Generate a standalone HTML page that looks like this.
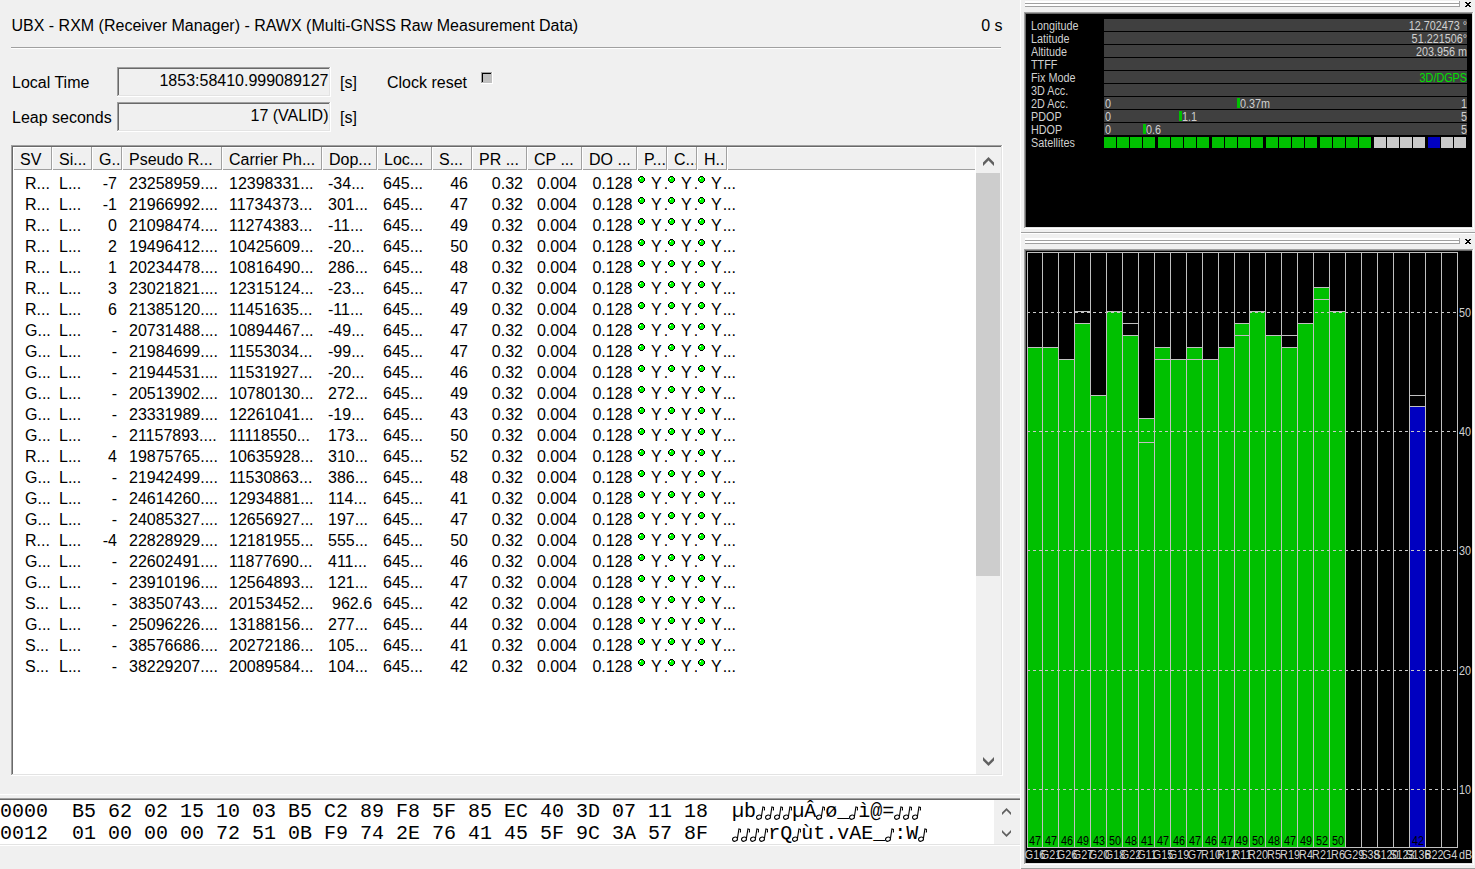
<!DOCTYPE html>
<html><head><meta charset="utf-8"><style>
html,body{margin:0;padding:0;}
body{width:1475px;height:869px;overflow:hidden;position:relative;background:#f0f0f0;font-family:"Liberation Sans", sans-serif;color:#000;}
body>div, body>svg{position:absolute;}
.t{white-space:nowrap;}
</style></head><body>
<div class="t" style="left:11.5px;top:18.46px;font-size:16px;line-height:16px;color:#000;font-family:'Liberation Sans', sans-serif;">UBX - RXM (Receiver Manager) - RAWX (Multi-GNSS Raw Measurement Data)</div>
<div class="t" style="left:402.5px;width:600px;text-align:right;top:18.46px;font-size:16px;line-height:16px;color:#000;font-family:'Liberation Sans', sans-serif;">0 s</div>
<div style="left:11px;top:47px;width:990px;height:1px;background:#a0a0a0;"></div>
<div style="left:11px;top:48px;width:990px;height:1px;background:#ffffff;"></div>
<div class="t" style="left:12px;top:75.46px;font-size:16px;line-height:16px;color:#000;font-family:'Liberation Sans', sans-serif;">Local Time</div>
<div style="left:117px;top:67px;width:214px;height:1px;background:#a0a0a0;"></div>
<div style="left:117px;top:67px;width:1px;height:30px;background:#a0a0a0;"></div>
<div style="left:118px;top:68px;width:212px;height:1px;background:#696969;"></div>
<div style="left:118px;top:68px;width:1px;height:28px;background:#696969;"></div>
<div style="left:117px;top:96px;width:214px;height:1px;background:#ffffff;"></div>
<div style="left:330px;top:67px;width:1px;height:30px;background:#ffffff;"></div>
<div style="left:118px;top:95px;width:212px;height:1px;background:#e3e3e3;"></div>
<div style="left:329px;top:68px;width:1px;height:28px;background:#e3e3e3;"></div>
<div class="t" style="left:-271.5px;width:600px;text-align:right;top:73.46px;font-size:16px;line-height:16px;color:#000;font-family:'Liberation Sans', sans-serif;">1853:58410.999089127</div>
<div class="t" style="left:340px;top:75.46px;font-size:16px;line-height:16px;color:#000;font-family:'Liberation Sans', sans-serif;">[s]</div>
<div class="t" style="left:387px;top:75.46px;font-size:16px;line-height:16px;color:#000;font-family:'Liberation Sans', sans-serif;">Clock reset</div>
<div style="left:481px;top:72px;width:12px;height:1px;background:#a0a0a0;"></div>
<div style="left:481px;top:72px;width:1px;height:12px;background:#a0a0a0;"></div>
<div style="left:482px;top:73px;width:10px;height:1px;background:#000000;"></div>
<div style="left:482px;top:73px;width:1px;height:10px;background:#000000;"></div>
<div style="left:481px;top:83px;width:12px;height:1px;background:#ffffff;"></div>
<div style="left:492px;top:72px;width:1px;height:12px;background:#ffffff;"></div>
<div style="left:482px;top:82px;width:10px;height:1px;background:#c0c0c0;"></div>
<div style="left:491px;top:73px;width:1px;height:10px;background:#c0c0c0;"></div>
<div style="left:483px;top:74px;width:8px;height:8px;background:#c0c0c0;"></div>
<div class="t" style="left:12px;top:110.46px;font-size:16px;line-height:16px;color:#000;font-family:'Liberation Sans', sans-serif;">Leap seconds</div>
<div style="left:117px;top:102px;width:214px;height:1px;background:#a0a0a0;"></div>
<div style="left:117px;top:102px;width:1px;height:30px;background:#a0a0a0;"></div>
<div style="left:118px;top:103px;width:212px;height:1px;background:#696969;"></div>
<div style="left:118px;top:103px;width:1px;height:28px;background:#696969;"></div>
<div style="left:117px;top:131px;width:214px;height:1px;background:#ffffff;"></div>
<div style="left:330px;top:102px;width:1px;height:30px;background:#ffffff;"></div>
<div style="left:118px;top:130px;width:212px;height:1px;background:#e3e3e3;"></div>
<div style="left:329px;top:103px;width:1px;height:28px;background:#e3e3e3;"></div>
<div class="t" style="left:-271.5px;width:600px;text-align:right;top:108.46px;font-size:16px;line-height:16px;color:#000;font-family:'Liberation Sans', sans-serif;">17 (VALID)</div>
<div class="t" style="left:340px;top:110.46px;font-size:16px;line-height:16px;color:#000;font-family:'Liberation Sans', sans-serif;">[s]</div>
<div style="left:11px;top:145px;width:992px;height:1px;background:#a0a0a0;"></div>
<div style="left:11px;top:145px;width:1px;height:631px;background:#a0a0a0;"></div>
<div style="left:12px;top:146px;width:990px;height:1px;background:#696969;"></div>
<div style="left:12px;top:146px;width:1px;height:629px;background:#696969;"></div>
<div style="left:11px;top:775px;width:992px;height:1px;background:#ffffff;"></div>
<div style="left:1002px;top:145px;width:1px;height:631px;background:#ffffff;"></div>
<div style="left:12px;top:774px;width:990px;height:1px;background:#e3e3e3;"></div>
<div style="left:1001px;top:146px;width:1px;height:629px;background:#e3e3e3;"></div>
<div style="left:13px;top:147px;width:988px;height:627px;background:#ffffff;"></div>
<div style="left:13px;top:147px;width:962px;height:23px;background:#f0f0f0;"></div>
<div style="left:13px;top:169px;width:962px;height:1px;background:#a0a0a0;"></div>
<div style="left:13px;top:147px;width:39px;height:1px;background:#ffffff;"></div>
<div style="left:51px;top:147px;width:1px;height:23px;background:#a0a0a0;"></div>
<div style="left:13px;top:147px;width:1px;height:23px;background:#ffffff;"></div>
<div class="t" style="left:20px;top:152.46px;width:31px;overflow:hidden;font-size:16px;line-height:16px">SV</div>
<div style="left:52px;top:147px;width:40px;height:1px;background:#ffffff;"></div>
<div style="left:91px;top:147px;width:1px;height:23px;background:#a0a0a0;"></div>
<div style="left:52px;top:147px;width:1px;height:23px;background:#ffffff;"></div>
<div class="t" style="left:59px;top:152.46px;width:32px;overflow:hidden;font-size:16px;line-height:16px">Si...</div>
<div style="left:92px;top:147px;width:30px;height:1px;background:#ffffff;"></div>
<div style="left:121px;top:147px;width:1px;height:23px;background:#a0a0a0;"></div>
<div style="left:92px;top:147px;width:1px;height:23px;background:#ffffff;"></div>
<div class="t" style="left:99px;top:152.46px;width:22px;overflow:hidden;font-size:16px;line-height:16px">G..</div>
<div style="left:122px;top:147px;width:100px;height:1px;background:#ffffff;"></div>
<div style="left:221px;top:147px;width:1px;height:23px;background:#a0a0a0;"></div>
<div style="left:122px;top:147px;width:1px;height:23px;background:#ffffff;"></div>
<div class="t" style="left:129px;top:152.46px;width:92px;overflow:hidden;font-size:16px;line-height:16px">Pseudo R...</div>
<div style="left:222px;top:147px;width:100px;height:1px;background:#ffffff;"></div>
<div style="left:321px;top:147px;width:1px;height:23px;background:#a0a0a0;"></div>
<div style="left:222px;top:147px;width:1px;height:23px;background:#ffffff;"></div>
<div class="t" style="left:229px;top:152.46px;width:92px;overflow:hidden;font-size:16px;line-height:16px">Carrier Ph...</div>
<div style="left:322px;top:147px;width:55px;height:1px;background:#ffffff;"></div>
<div style="left:376px;top:147px;width:1px;height:23px;background:#a0a0a0;"></div>
<div style="left:322px;top:147px;width:1px;height:23px;background:#ffffff;"></div>
<div class="t" style="left:329px;top:152.46px;width:47px;overflow:hidden;font-size:16px;line-height:16px">Dop...</div>
<div style="left:377px;top:147px;width:55px;height:1px;background:#ffffff;"></div>
<div style="left:431px;top:147px;width:1px;height:23px;background:#a0a0a0;"></div>
<div style="left:377px;top:147px;width:1px;height:23px;background:#ffffff;"></div>
<div class="t" style="left:384px;top:152.46px;width:47px;overflow:hidden;font-size:16px;line-height:16px">Loc...</div>
<div style="left:432px;top:147px;width:40px;height:1px;background:#ffffff;"></div>
<div style="left:471px;top:147px;width:1px;height:23px;background:#a0a0a0;"></div>
<div style="left:432px;top:147px;width:1px;height:23px;background:#ffffff;"></div>
<div class="t" style="left:439px;top:152.46px;width:32px;overflow:hidden;font-size:16px;line-height:16px">S...</div>
<div style="left:472px;top:147px;width:55px;height:1px;background:#ffffff;"></div>
<div style="left:526px;top:147px;width:1px;height:23px;background:#a0a0a0;"></div>
<div style="left:472px;top:147px;width:1px;height:23px;background:#ffffff;"></div>
<div class="t" style="left:479px;top:152.46px;width:47px;overflow:hidden;font-size:16px;line-height:16px">PR ...</div>
<div style="left:527px;top:147px;width:55px;height:1px;background:#ffffff;"></div>
<div style="left:581px;top:147px;width:1px;height:23px;background:#a0a0a0;"></div>
<div style="left:527px;top:147px;width:1px;height:23px;background:#ffffff;"></div>
<div class="t" style="left:534px;top:152.46px;width:47px;overflow:hidden;font-size:16px;line-height:16px">CP ...</div>
<div style="left:582px;top:147px;width:55px;height:1px;background:#ffffff;"></div>
<div style="left:636px;top:147px;width:1px;height:23px;background:#a0a0a0;"></div>
<div style="left:582px;top:147px;width:1px;height:23px;background:#ffffff;"></div>
<div class="t" style="left:589px;top:152.46px;width:47px;overflow:hidden;font-size:16px;line-height:16px">DO ...</div>
<div style="left:637px;top:147px;width:30px;height:1px;background:#ffffff;"></div>
<div style="left:666px;top:147px;width:1px;height:23px;background:#a0a0a0;"></div>
<div style="left:637px;top:147px;width:1px;height:23px;background:#ffffff;"></div>
<div class="t" style="left:644px;top:152.46px;width:22px;overflow:hidden;font-size:16px;line-height:16px">P...</div>
<div style="left:667px;top:147px;width:30px;height:1px;background:#ffffff;"></div>
<div style="left:696px;top:147px;width:1px;height:23px;background:#a0a0a0;"></div>
<div style="left:667px;top:147px;width:1px;height:23px;background:#ffffff;"></div>
<div class="t" style="left:674px;top:152.46px;width:22px;overflow:hidden;font-size:16px;line-height:16px">C...</div>
<div style="left:697px;top:147px;width:30px;height:1px;background:#ffffff;"></div>
<div style="left:726px;top:147px;width:1px;height:23px;background:#a0a0a0;"></div>
<div style="left:697px;top:147px;width:1px;height:23px;background:#ffffff;"></div>
<div class="t" style="left:704px;top:152.46px;width:22px;overflow:hidden;font-size:16px;line-height:16px">H..</div>
<div style="left:727px;top:147px;width:1px;height:23px;background:#ffffff;"></div>
<div style="left:727px;top:147px;width:248px;height:1px;background:#ffffff;"></div>
<svg style="position:absolute;left:0;top:0" width="0" height="0"><defs><g id="dot" shape-rendering="crispEdges"><rect x="2" y="0" width="3" height="1" fill="#000"/><rect x="2" y="6" width="3" height="1" fill="#000"/><rect x="0" y="2" width="1" height="3" fill="#000"/><rect x="6" y="2" width="1" height="3" fill="#000"/><rect x="1" y="1" width="1" height="1" fill="#000"/><rect x="5" y="1" width="1" height="1" fill="#000"/><rect x="1" y="5" width="1" height="1" fill="#000"/><rect x="5" y="5" width="1" height="1" fill="#000"/><rect x="2" y="1" width="3" height="5" fill="#00ff00"/><rect x="1" y="2" width="5" height="3" fill="#00ff00"/><rect x="2" y="2" width="1" height="1" fill="#ffffff"/></g></defs></svg>
<div class="t" style="left:25px;top:176.46px;font-size:16px;line-height:16px;color:#000;font-family:'Liberation Sans', sans-serif;">R...</div>
<div class="t" style="left:59px;top:176.46px;font-size:16px;line-height:16px;color:#000;font-family:'Liberation Sans', sans-serif;">L...</div>
<div class="t" style="left:-483px;width:600px;text-align:right;top:176.46px;font-size:16px;line-height:16px;color:#000;font-family:'Liberation Sans', sans-serif;">-7</div>
<div class="t" style="left:129px;top:176.46px;font-size:16px;line-height:16px;color:#000;font-family:'Liberation Sans', sans-serif;">23258959....</div>
<div class="t" style="left:229px;top:176.46px;font-size:16px;line-height:16px;color:#000;font-family:'Liberation Sans', sans-serif;">12398331...</div>
<div class="t" style="left:328px;top:176.46px;font-size:16px;line-height:16px;color:#000;font-family:'Liberation Sans', sans-serif;">-34...</div>
<div class="t" style="left:383px;top:176.46px;font-size:16px;line-height:16px;color:#000;font-family:'Liberation Sans', sans-serif;">645...</div>
<div class="t" style="left:-132px;width:600px;text-align:right;top:176.46px;font-size:16px;line-height:16px;color:#000;font-family:'Liberation Sans', sans-serif;">46</div>
<div class="t" style="left:-77px;width:600px;text-align:right;top:176.46px;font-size:16px;line-height:16px;color:#000;font-family:'Liberation Sans', sans-serif;">0.32</div>
<div class="t" style="left:-23px;width:600px;text-align:right;top:176.46px;font-size:16px;line-height:16px;color:#000;font-family:'Liberation Sans', sans-serif;">0.004</div>
<div class="t" style="left:32.5px;width:600px;text-align:right;top:176.46px;font-size:16px;line-height:16px;color:#000;font-family:'Liberation Sans', sans-serif;">0.128</div>
<svg style="position:absolute;left:638px;top:176px" width="7" height="7"><use href="#dot"/></svg>
<div class="t" style="left:651px;top:176.46px;width:16px;overflow:hidden;font-size:16px;line-height:16px">Y<span style='margin-left:2px'>.</span></div>
<svg style="position:absolute;left:668px;top:176px" width="7" height="7"><use href="#dot"/></svg>
<div class="t" style="left:681px;top:176.46px;width:16px;overflow:hidden;font-size:16px;line-height:16px">Y<span style='margin-left:2px'>.</span></div>
<svg style="position:absolute;left:698px;top:176px" width="7" height="7"><use href="#dot"/></svg>
<div class="t" style="left:711px;top:176.46px;width:47px;overflow:hidden;font-size:16px;line-height:16px">Y<span style='margin-left:1px'>...</span></div>
<div class="t" style="left:25px;top:197.46px;font-size:16px;line-height:16px;color:#000;font-family:'Liberation Sans', sans-serif;">R...</div>
<div class="t" style="left:59px;top:197.46px;font-size:16px;line-height:16px;color:#000;font-family:'Liberation Sans', sans-serif;">L...</div>
<div class="t" style="left:-483px;width:600px;text-align:right;top:197.46px;font-size:16px;line-height:16px;color:#000;font-family:'Liberation Sans', sans-serif;">-1</div>
<div class="t" style="left:129px;top:197.46px;font-size:16px;line-height:16px;color:#000;font-family:'Liberation Sans', sans-serif;">21966992....</div>
<div class="t" style="left:229px;top:197.46px;font-size:16px;line-height:16px;color:#000;font-family:'Liberation Sans', sans-serif;">11734373...</div>
<div class="t" style="left:328px;top:197.46px;font-size:16px;line-height:16px;color:#000;font-family:'Liberation Sans', sans-serif;">301...</div>
<div class="t" style="left:383px;top:197.46px;font-size:16px;line-height:16px;color:#000;font-family:'Liberation Sans', sans-serif;">645...</div>
<div class="t" style="left:-132px;width:600px;text-align:right;top:197.46px;font-size:16px;line-height:16px;color:#000;font-family:'Liberation Sans', sans-serif;">47</div>
<div class="t" style="left:-77px;width:600px;text-align:right;top:197.46px;font-size:16px;line-height:16px;color:#000;font-family:'Liberation Sans', sans-serif;">0.32</div>
<div class="t" style="left:-23px;width:600px;text-align:right;top:197.46px;font-size:16px;line-height:16px;color:#000;font-family:'Liberation Sans', sans-serif;">0.004</div>
<div class="t" style="left:32.5px;width:600px;text-align:right;top:197.46px;font-size:16px;line-height:16px;color:#000;font-family:'Liberation Sans', sans-serif;">0.128</div>
<svg style="position:absolute;left:638px;top:197px" width="7" height="7"><use href="#dot"/></svg>
<div class="t" style="left:651px;top:197.46px;width:16px;overflow:hidden;font-size:16px;line-height:16px">Y<span style='margin-left:2px'>.</span></div>
<svg style="position:absolute;left:668px;top:197px" width="7" height="7"><use href="#dot"/></svg>
<div class="t" style="left:681px;top:197.46px;width:16px;overflow:hidden;font-size:16px;line-height:16px">Y<span style='margin-left:2px'>.</span></div>
<svg style="position:absolute;left:698px;top:197px" width="7" height="7"><use href="#dot"/></svg>
<div class="t" style="left:711px;top:197.46px;width:47px;overflow:hidden;font-size:16px;line-height:16px">Y<span style='margin-left:1px'>...</span></div>
<div class="t" style="left:25px;top:218.46px;font-size:16px;line-height:16px;color:#000;font-family:'Liberation Sans', sans-serif;">R...</div>
<div class="t" style="left:59px;top:218.46px;font-size:16px;line-height:16px;color:#000;font-family:'Liberation Sans', sans-serif;">L...</div>
<div class="t" style="left:-483px;width:600px;text-align:right;top:218.46px;font-size:16px;line-height:16px;color:#000;font-family:'Liberation Sans', sans-serif;">0</div>
<div class="t" style="left:129px;top:218.46px;font-size:16px;line-height:16px;color:#000;font-family:'Liberation Sans', sans-serif;">21098474....</div>
<div class="t" style="left:229px;top:218.46px;font-size:16px;line-height:16px;color:#000;font-family:'Liberation Sans', sans-serif;">11274383...</div>
<div class="t" style="left:328px;top:218.46px;font-size:16px;line-height:16px;color:#000;font-family:'Liberation Sans', sans-serif;">-11...</div>
<div class="t" style="left:383px;top:218.46px;font-size:16px;line-height:16px;color:#000;font-family:'Liberation Sans', sans-serif;">645...</div>
<div class="t" style="left:-132px;width:600px;text-align:right;top:218.46px;font-size:16px;line-height:16px;color:#000;font-family:'Liberation Sans', sans-serif;">49</div>
<div class="t" style="left:-77px;width:600px;text-align:right;top:218.46px;font-size:16px;line-height:16px;color:#000;font-family:'Liberation Sans', sans-serif;">0.32</div>
<div class="t" style="left:-23px;width:600px;text-align:right;top:218.46px;font-size:16px;line-height:16px;color:#000;font-family:'Liberation Sans', sans-serif;">0.004</div>
<div class="t" style="left:32.5px;width:600px;text-align:right;top:218.46px;font-size:16px;line-height:16px;color:#000;font-family:'Liberation Sans', sans-serif;">0.128</div>
<svg style="position:absolute;left:638px;top:218px" width="7" height="7"><use href="#dot"/></svg>
<div class="t" style="left:651px;top:218.46px;width:16px;overflow:hidden;font-size:16px;line-height:16px">Y<span style='margin-left:2px'>.</span></div>
<svg style="position:absolute;left:668px;top:218px" width="7" height="7"><use href="#dot"/></svg>
<div class="t" style="left:681px;top:218.46px;width:16px;overflow:hidden;font-size:16px;line-height:16px">Y<span style='margin-left:2px'>.</span></div>
<svg style="position:absolute;left:698px;top:218px" width="7" height="7"><use href="#dot"/></svg>
<div class="t" style="left:711px;top:218.46px;width:47px;overflow:hidden;font-size:16px;line-height:16px">Y<span style='margin-left:1px'>...</span></div>
<div class="t" style="left:25px;top:239.46px;font-size:16px;line-height:16px;color:#000;font-family:'Liberation Sans', sans-serif;">R...</div>
<div class="t" style="left:59px;top:239.46px;font-size:16px;line-height:16px;color:#000;font-family:'Liberation Sans', sans-serif;">L...</div>
<div class="t" style="left:-483px;width:600px;text-align:right;top:239.46px;font-size:16px;line-height:16px;color:#000;font-family:'Liberation Sans', sans-serif;">2</div>
<div class="t" style="left:129px;top:239.46px;font-size:16px;line-height:16px;color:#000;font-family:'Liberation Sans', sans-serif;">19496412....</div>
<div class="t" style="left:229px;top:239.46px;font-size:16px;line-height:16px;color:#000;font-family:'Liberation Sans', sans-serif;">10425609...</div>
<div class="t" style="left:328px;top:239.46px;font-size:16px;line-height:16px;color:#000;font-family:'Liberation Sans', sans-serif;">-20...</div>
<div class="t" style="left:383px;top:239.46px;font-size:16px;line-height:16px;color:#000;font-family:'Liberation Sans', sans-serif;">645...</div>
<div class="t" style="left:-132px;width:600px;text-align:right;top:239.46px;font-size:16px;line-height:16px;color:#000;font-family:'Liberation Sans', sans-serif;">50</div>
<div class="t" style="left:-77px;width:600px;text-align:right;top:239.46px;font-size:16px;line-height:16px;color:#000;font-family:'Liberation Sans', sans-serif;">0.32</div>
<div class="t" style="left:-23px;width:600px;text-align:right;top:239.46px;font-size:16px;line-height:16px;color:#000;font-family:'Liberation Sans', sans-serif;">0.004</div>
<div class="t" style="left:32.5px;width:600px;text-align:right;top:239.46px;font-size:16px;line-height:16px;color:#000;font-family:'Liberation Sans', sans-serif;">0.128</div>
<svg style="position:absolute;left:638px;top:239px" width="7" height="7"><use href="#dot"/></svg>
<div class="t" style="left:651px;top:239.46px;width:16px;overflow:hidden;font-size:16px;line-height:16px">Y<span style='margin-left:2px'>.</span></div>
<svg style="position:absolute;left:668px;top:239px" width="7" height="7"><use href="#dot"/></svg>
<div class="t" style="left:681px;top:239.46px;width:16px;overflow:hidden;font-size:16px;line-height:16px">Y<span style='margin-left:2px'>.</span></div>
<svg style="position:absolute;left:698px;top:239px" width="7" height="7"><use href="#dot"/></svg>
<div class="t" style="left:711px;top:239.46px;width:47px;overflow:hidden;font-size:16px;line-height:16px">Y<span style='margin-left:1px'>...</span></div>
<div class="t" style="left:25px;top:260.46px;font-size:16px;line-height:16px;color:#000;font-family:'Liberation Sans', sans-serif;">R...</div>
<div class="t" style="left:59px;top:260.46px;font-size:16px;line-height:16px;color:#000;font-family:'Liberation Sans', sans-serif;">L...</div>
<div class="t" style="left:-483px;width:600px;text-align:right;top:260.46px;font-size:16px;line-height:16px;color:#000;font-family:'Liberation Sans', sans-serif;">1</div>
<div class="t" style="left:129px;top:260.46px;font-size:16px;line-height:16px;color:#000;font-family:'Liberation Sans', sans-serif;">20234478....</div>
<div class="t" style="left:229px;top:260.46px;font-size:16px;line-height:16px;color:#000;font-family:'Liberation Sans', sans-serif;">10816490...</div>
<div class="t" style="left:328px;top:260.46px;font-size:16px;line-height:16px;color:#000;font-family:'Liberation Sans', sans-serif;">286...</div>
<div class="t" style="left:383px;top:260.46px;font-size:16px;line-height:16px;color:#000;font-family:'Liberation Sans', sans-serif;">645...</div>
<div class="t" style="left:-132px;width:600px;text-align:right;top:260.46px;font-size:16px;line-height:16px;color:#000;font-family:'Liberation Sans', sans-serif;">48</div>
<div class="t" style="left:-77px;width:600px;text-align:right;top:260.46px;font-size:16px;line-height:16px;color:#000;font-family:'Liberation Sans', sans-serif;">0.32</div>
<div class="t" style="left:-23px;width:600px;text-align:right;top:260.46px;font-size:16px;line-height:16px;color:#000;font-family:'Liberation Sans', sans-serif;">0.004</div>
<div class="t" style="left:32.5px;width:600px;text-align:right;top:260.46px;font-size:16px;line-height:16px;color:#000;font-family:'Liberation Sans', sans-serif;">0.128</div>
<svg style="position:absolute;left:638px;top:260px" width="7" height="7"><use href="#dot"/></svg>
<div class="t" style="left:651px;top:260.46px;width:16px;overflow:hidden;font-size:16px;line-height:16px">Y<span style='margin-left:2px'>.</span></div>
<svg style="position:absolute;left:668px;top:260px" width="7" height="7"><use href="#dot"/></svg>
<div class="t" style="left:681px;top:260.46px;width:16px;overflow:hidden;font-size:16px;line-height:16px">Y<span style='margin-left:2px'>.</span></div>
<svg style="position:absolute;left:698px;top:260px" width="7" height="7"><use href="#dot"/></svg>
<div class="t" style="left:711px;top:260.46px;width:47px;overflow:hidden;font-size:16px;line-height:16px">Y<span style='margin-left:1px'>...</span></div>
<div class="t" style="left:25px;top:281.46px;font-size:16px;line-height:16px;color:#000;font-family:'Liberation Sans', sans-serif;">R...</div>
<div class="t" style="left:59px;top:281.46px;font-size:16px;line-height:16px;color:#000;font-family:'Liberation Sans', sans-serif;">L...</div>
<div class="t" style="left:-483px;width:600px;text-align:right;top:281.46px;font-size:16px;line-height:16px;color:#000;font-family:'Liberation Sans', sans-serif;">3</div>
<div class="t" style="left:129px;top:281.46px;font-size:16px;line-height:16px;color:#000;font-family:'Liberation Sans', sans-serif;">23021821....</div>
<div class="t" style="left:229px;top:281.46px;font-size:16px;line-height:16px;color:#000;font-family:'Liberation Sans', sans-serif;">12315124...</div>
<div class="t" style="left:328px;top:281.46px;font-size:16px;line-height:16px;color:#000;font-family:'Liberation Sans', sans-serif;">-23...</div>
<div class="t" style="left:383px;top:281.46px;font-size:16px;line-height:16px;color:#000;font-family:'Liberation Sans', sans-serif;">645...</div>
<div class="t" style="left:-132px;width:600px;text-align:right;top:281.46px;font-size:16px;line-height:16px;color:#000;font-family:'Liberation Sans', sans-serif;">47</div>
<div class="t" style="left:-77px;width:600px;text-align:right;top:281.46px;font-size:16px;line-height:16px;color:#000;font-family:'Liberation Sans', sans-serif;">0.32</div>
<div class="t" style="left:-23px;width:600px;text-align:right;top:281.46px;font-size:16px;line-height:16px;color:#000;font-family:'Liberation Sans', sans-serif;">0.004</div>
<div class="t" style="left:32.5px;width:600px;text-align:right;top:281.46px;font-size:16px;line-height:16px;color:#000;font-family:'Liberation Sans', sans-serif;">0.128</div>
<svg style="position:absolute;left:638px;top:281px" width="7" height="7"><use href="#dot"/></svg>
<div class="t" style="left:651px;top:281.46px;width:16px;overflow:hidden;font-size:16px;line-height:16px">Y<span style='margin-left:2px'>.</span></div>
<svg style="position:absolute;left:668px;top:281px" width="7" height="7"><use href="#dot"/></svg>
<div class="t" style="left:681px;top:281.46px;width:16px;overflow:hidden;font-size:16px;line-height:16px">Y<span style='margin-left:2px'>.</span></div>
<svg style="position:absolute;left:698px;top:281px" width="7" height="7"><use href="#dot"/></svg>
<div class="t" style="left:711px;top:281.46px;width:47px;overflow:hidden;font-size:16px;line-height:16px">Y<span style='margin-left:1px'>...</span></div>
<div class="t" style="left:25px;top:302.46px;font-size:16px;line-height:16px;color:#000;font-family:'Liberation Sans', sans-serif;">R...</div>
<div class="t" style="left:59px;top:302.46px;font-size:16px;line-height:16px;color:#000;font-family:'Liberation Sans', sans-serif;">L...</div>
<div class="t" style="left:-483px;width:600px;text-align:right;top:302.46px;font-size:16px;line-height:16px;color:#000;font-family:'Liberation Sans', sans-serif;">6</div>
<div class="t" style="left:129px;top:302.46px;font-size:16px;line-height:16px;color:#000;font-family:'Liberation Sans', sans-serif;">21385120....</div>
<div class="t" style="left:229px;top:302.46px;font-size:16px;line-height:16px;color:#000;font-family:'Liberation Sans', sans-serif;">11451635...</div>
<div class="t" style="left:328px;top:302.46px;font-size:16px;line-height:16px;color:#000;font-family:'Liberation Sans', sans-serif;">-11...</div>
<div class="t" style="left:383px;top:302.46px;font-size:16px;line-height:16px;color:#000;font-family:'Liberation Sans', sans-serif;">645...</div>
<div class="t" style="left:-132px;width:600px;text-align:right;top:302.46px;font-size:16px;line-height:16px;color:#000;font-family:'Liberation Sans', sans-serif;">49</div>
<div class="t" style="left:-77px;width:600px;text-align:right;top:302.46px;font-size:16px;line-height:16px;color:#000;font-family:'Liberation Sans', sans-serif;">0.32</div>
<div class="t" style="left:-23px;width:600px;text-align:right;top:302.46px;font-size:16px;line-height:16px;color:#000;font-family:'Liberation Sans', sans-serif;">0.004</div>
<div class="t" style="left:32.5px;width:600px;text-align:right;top:302.46px;font-size:16px;line-height:16px;color:#000;font-family:'Liberation Sans', sans-serif;">0.128</div>
<svg style="position:absolute;left:638px;top:302px" width="7" height="7"><use href="#dot"/></svg>
<div class="t" style="left:651px;top:302.46px;width:16px;overflow:hidden;font-size:16px;line-height:16px">Y<span style='margin-left:2px'>.</span></div>
<svg style="position:absolute;left:668px;top:302px" width="7" height="7"><use href="#dot"/></svg>
<div class="t" style="left:681px;top:302.46px;width:16px;overflow:hidden;font-size:16px;line-height:16px">Y<span style='margin-left:2px'>.</span></div>
<svg style="position:absolute;left:698px;top:302px" width="7" height="7"><use href="#dot"/></svg>
<div class="t" style="left:711px;top:302.46px;width:47px;overflow:hidden;font-size:16px;line-height:16px">Y<span style='margin-left:1px'>...</span></div>
<div class="t" style="left:25px;top:323.46px;font-size:16px;line-height:16px;color:#000;font-family:'Liberation Sans', sans-serif;">G...</div>
<div class="t" style="left:59px;top:323.46px;font-size:16px;line-height:16px;color:#000;font-family:'Liberation Sans', sans-serif;">L...</div>
<div class="t" style="left:-483px;width:600px;text-align:right;top:323.46px;font-size:16px;line-height:16px;color:#000;font-family:'Liberation Sans', sans-serif;">-</div>
<div class="t" style="left:129px;top:323.46px;font-size:16px;line-height:16px;color:#000;font-family:'Liberation Sans', sans-serif;">20731488....</div>
<div class="t" style="left:229px;top:323.46px;font-size:16px;line-height:16px;color:#000;font-family:'Liberation Sans', sans-serif;">10894467...</div>
<div class="t" style="left:328px;top:323.46px;font-size:16px;line-height:16px;color:#000;font-family:'Liberation Sans', sans-serif;">-49...</div>
<div class="t" style="left:383px;top:323.46px;font-size:16px;line-height:16px;color:#000;font-family:'Liberation Sans', sans-serif;">645...</div>
<div class="t" style="left:-132px;width:600px;text-align:right;top:323.46px;font-size:16px;line-height:16px;color:#000;font-family:'Liberation Sans', sans-serif;">47</div>
<div class="t" style="left:-77px;width:600px;text-align:right;top:323.46px;font-size:16px;line-height:16px;color:#000;font-family:'Liberation Sans', sans-serif;">0.32</div>
<div class="t" style="left:-23px;width:600px;text-align:right;top:323.46px;font-size:16px;line-height:16px;color:#000;font-family:'Liberation Sans', sans-serif;">0.004</div>
<div class="t" style="left:32.5px;width:600px;text-align:right;top:323.46px;font-size:16px;line-height:16px;color:#000;font-family:'Liberation Sans', sans-serif;">0.128</div>
<svg style="position:absolute;left:638px;top:323px" width="7" height="7"><use href="#dot"/></svg>
<div class="t" style="left:651px;top:323.46px;width:16px;overflow:hidden;font-size:16px;line-height:16px">Y<span style='margin-left:2px'>.</span></div>
<svg style="position:absolute;left:668px;top:323px" width="7" height="7"><use href="#dot"/></svg>
<div class="t" style="left:681px;top:323.46px;width:16px;overflow:hidden;font-size:16px;line-height:16px">Y<span style='margin-left:2px'>.</span></div>
<svg style="position:absolute;left:698px;top:323px" width="7" height="7"><use href="#dot"/></svg>
<div class="t" style="left:711px;top:323.46px;width:47px;overflow:hidden;font-size:16px;line-height:16px">Y<span style='margin-left:1px'>...</span></div>
<div class="t" style="left:25px;top:344.46px;font-size:16px;line-height:16px;color:#000;font-family:'Liberation Sans', sans-serif;">G...</div>
<div class="t" style="left:59px;top:344.46px;font-size:16px;line-height:16px;color:#000;font-family:'Liberation Sans', sans-serif;">L...</div>
<div class="t" style="left:-483px;width:600px;text-align:right;top:344.46px;font-size:16px;line-height:16px;color:#000;font-family:'Liberation Sans', sans-serif;">-</div>
<div class="t" style="left:129px;top:344.46px;font-size:16px;line-height:16px;color:#000;font-family:'Liberation Sans', sans-serif;">21984699....</div>
<div class="t" style="left:229px;top:344.46px;font-size:16px;line-height:16px;color:#000;font-family:'Liberation Sans', sans-serif;">11553034...</div>
<div class="t" style="left:328px;top:344.46px;font-size:16px;line-height:16px;color:#000;font-family:'Liberation Sans', sans-serif;">-99...</div>
<div class="t" style="left:383px;top:344.46px;font-size:16px;line-height:16px;color:#000;font-family:'Liberation Sans', sans-serif;">645...</div>
<div class="t" style="left:-132px;width:600px;text-align:right;top:344.46px;font-size:16px;line-height:16px;color:#000;font-family:'Liberation Sans', sans-serif;">47</div>
<div class="t" style="left:-77px;width:600px;text-align:right;top:344.46px;font-size:16px;line-height:16px;color:#000;font-family:'Liberation Sans', sans-serif;">0.32</div>
<div class="t" style="left:-23px;width:600px;text-align:right;top:344.46px;font-size:16px;line-height:16px;color:#000;font-family:'Liberation Sans', sans-serif;">0.004</div>
<div class="t" style="left:32.5px;width:600px;text-align:right;top:344.46px;font-size:16px;line-height:16px;color:#000;font-family:'Liberation Sans', sans-serif;">0.128</div>
<svg style="position:absolute;left:638px;top:344px" width="7" height="7"><use href="#dot"/></svg>
<div class="t" style="left:651px;top:344.46px;width:16px;overflow:hidden;font-size:16px;line-height:16px">Y<span style='margin-left:2px'>.</span></div>
<svg style="position:absolute;left:668px;top:344px" width="7" height="7"><use href="#dot"/></svg>
<div class="t" style="left:681px;top:344.46px;width:16px;overflow:hidden;font-size:16px;line-height:16px">Y<span style='margin-left:2px'>.</span></div>
<svg style="position:absolute;left:698px;top:344px" width="7" height="7"><use href="#dot"/></svg>
<div class="t" style="left:711px;top:344.46px;width:47px;overflow:hidden;font-size:16px;line-height:16px">Y<span style='margin-left:1px'>...</span></div>
<div class="t" style="left:25px;top:365.46px;font-size:16px;line-height:16px;color:#000;font-family:'Liberation Sans', sans-serif;">G...</div>
<div class="t" style="left:59px;top:365.46px;font-size:16px;line-height:16px;color:#000;font-family:'Liberation Sans', sans-serif;">L...</div>
<div class="t" style="left:-483px;width:600px;text-align:right;top:365.46px;font-size:16px;line-height:16px;color:#000;font-family:'Liberation Sans', sans-serif;">-</div>
<div class="t" style="left:129px;top:365.46px;font-size:16px;line-height:16px;color:#000;font-family:'Liberation Sans', sans-serif;">21944531....</div>
<div class="t" style="left:229px;top:365.46px;font-size:16px;line-height:16px;color:#000;font-family:'Liberation Sans', sans-serif;">11531927...</div>
<div class="t" style="left:328px;top:365.46px;font-size:16px;line-height:16px;color:#000;font-family:'Liberation Sans', sans-serif;">-20...</div>
<div class="t" style="left:383px;top:365.46px;font-size:16px;line-height:16px;color:#000;font-family:'Liberation Sans', sans-serif;">645...</div>
<div class="t" style="left:-132px;width:600px;text-align:right;top:365.46px;font-size:16px;line-height:16px;color:#000;font-family:'Liberation Sans', sans-serif;">46</div>
<div class="t" style="left:-77px;width:600px;text-align:right;top:365.46px;font-size:16px;line-height:16px;color:#000;font-family:'Liberation Sans', sans-serif;">0.32</div>
<div class="t" style="left:-23px;width:600px;text-align:right;top:365.46px;font-size:16px;line-height:16px;color:#000;font-family:'Liberation Sans', sans-serif;">0.004</div>
<div class="t" style="left:32.5px;width:600px;text-align:right;top:365.46px;font-size:16px;line-height:16px;color:#000;font-family:'Liberation Sans', sans-serif;">0.128</div>
<svg style="position:absolute;left:638px;top:365px" width="7" height="7"><use href="#dot"/></svg>
<div class="t" style="left:651px;top:365.46px;width:16px;overflow:hidden;font-size:16px;line-height:16px">Y<span style='margin-left:2px'>.</span></div>
<svg style="position:absolute;left:668px;top:365px" width="7" height="7"><use href="#dot"/></svg>
<div class="t" style="left:681px;top:365.46px;width:16px;overflow:hidden;font-size:16px;line-height:16px">Y<span style='margin-left:2px'>.</span></div>
<svg style="position:absolute;left:698px;top:365px" width="7" height="7"><use href="#dot"/></svg>
<div class="t" style="left:711px;top:365.46px;width:47px;overflow:hidden;font-size:16px;line-height:16px">Y<span style='margin-left:1px'>...</span></div>
<div class="t" style="left:25px;top:386.46px;font-size:16px;line-height:16px;color:#000;font-family:'Liberation Sans', sans-serif;">G...</div>
<div class="t" style="left:59px;top:386.46px;font-size:16px;line-height:16px;color:#000;font-family:'Liberation Sans', sans-serif;">L...</div>
<div class="t" style="left:-483px;width:600px;text-align:right;top:386.46px;font-size:16px;line-height:16px;color:#000;font-family:'Liberation Sans', sans-serif;">-</div>
<div class="t" style="left:129px;top:386.46px;font-size:16px;line-height:16px;color:#000;font-family:'Liberation Sans', sans-serif;">20513902....</div>
<div class="t" style="left:229px;top:386.46px;font-size:16px;line-height:16px;color:#000;font-family:'Liberation Sans', sans-serif;">10780130...</div>
<div class="t" style="left:328px;top:386.46px;font-size:16px;line-height:16px;color:#000;font-family:'Liberation Sans', sans-serif;">272...</div>
<div class="t" style="left:383px;top:386.46px;font-size:16px;line-height:16px;color:#000;font-family:'Liberation Sans', sans-serif;">645...</div>
<div class="t" style="left:-132px;width:600px;text-align:right;top:386.46px;font-size:16px;line-height:16px;color:#000;font-family:'Liberation Sans', sans-serif;">49</div>
<div class="t" style="left:-77px;width:600px;text-align:right;top:386.46px;font-size:16px;line-height:16px;color:#000;font-family:'Liberation Sans', sans-serif;">0.32</div>
<div class="t" style="left:-23px;width:600px;text-align:right;top:386.46px;font-size:16px;line-height:16px;color:#000;font-family:'Liberation Sans', sans-serif;">0.004</div>
<div class="t" style="left:32.5px;width:600px;text-align:right;top:386.46px;font-size:16px;line-height:16px;color:#000;font-family:'Liberation Sans', sans-serif;">0.128</div>
<svg style="position:absolute;left:638px;top:386px" width="7" height="7"><use href="#dot"/></svg>
<div class="t" style="left:651px;top:386.46px;width:16px;overflow:hidden;font-size:16px;line-height:16px">Y<span style='margin-left:2px'>.</span></div>
<svg style="position:absolute;left:668px;top:386px" width="7" height="7"><use href="#dot"/></svg>
<div class="t" style="left:681px;top:386.46px;width:16px;overflow:hidden;font-size:16px;line-height:16px">Y<span style='margin-left:2px'>.</span></div>
<svg style="position:absolute;left:698px;top:386px" width="7" height="7"><use href="#dot"/></svg>
<div class="t" style="left:711px;top:386.46px;width:47px;overflow:hidden;font-size:16px;line-height:16px">Y<span style='margin-left:1px'>...</span></div>
<div class="t" style="left:25px;top:407.46px;font-size:16px;line-height:16px;color:#000;font-family:'Liberation Sans', sans-serif;">G...</div>
<div class="t" style="left:59px;top:407.46px;font-size:16px;line-height:16px;color:#000;font-family:'Liberation Sans', sans-serif;">L...</div>
<div class="t" style="left:-483px;width:600px;text-align:right;top:407.46px;font-size:16px;line-height:16px;color:#000;font-family:'Liberation Sans', sans-serif;">-</div>
<div class="t" style="left:129px;top:407.46px;font-size:16px;line-height:16px;color:#000;font-family:'Liberation Sans', sans-serif;">23331989....</div>
<div class="t" style="left:229px;top:407.46px;font-size:16px;line-height:16px;color:#000;font-family:'Liberation Sans', sans-serif;">12261041...</div>
<div class="t" style="left:328px;top:407.46px;font-size:16px;line-height:16px;color:#000;font-family:'Liberation Sans', sans-serif;">-19...</div>
<div class="t" style="left:383px;top:407.46px;font-size:16px;line-height:16px;color:#000;font-family:'Liberation Sans', sans-serif;">645...</div>
<div class="t" style="left:-132px;width:600px;text-align:right;top:407.46px;font-size:16px;line-height:16px;color:#000;font-family:'Liberation Sans', sans-serif;">43</div>
<div class="t" style="left:-77px;width:600px;text-align:right;top:407.46px;font-size:16px;line-height:16px;color:#000;font-family:'Liberation Sans', sans-serif;">0.32</div>
<div class="t" style="left:-23px;width:600px;text-align:right;top:407.46px;font-size:16px;line-height:16px;color:#000;font-family:'Liberation Sans', sans-serif;">0.004</div>
<div class="t" style="left:32.5px;width:600px;text-align:right;top:407.46px;font-size:16px;line-height:16px;color:#000;font-family:'Liberation Sans', sans-serif;">0.128</div>
<svg style="position:absolute;left:638px;top:407px" width="7" height="7"><use href="#dot"/></svg>
<div class="t" style="left:651px;top:407.46px;width:16px;overflow:hidden;font-size:16px;line-height:16px">Y<span style='margin-left:2px'>.</span></div>
<svg style="position:absolute;left:668px;top:407px" width="7" height="7"><use href="#dot"/></svg>
<div class="t" style="left:681px;top:407.46px;width:16px;overflow:hidden;font-size:16px;line-height:16px">Y<span style='margin-left:2px'>.</span></div>
<svg style="position:absolute;left:698px;top:407px" width="7" height="7"><use href="#dot"/></svg>
<div class="t" style="left:711px;top:407.46px;width:47px;overflow:hidden;font-size:16px;line-height:16px">Y<span style='margin-left:1px'>...</span></div>
<div class="t" style="left:25px;top:428.46px;font-size:16px;line-height:16px;color:#000;font-family:'Liberation Sans', sans-serif;">G...</div>
<div class="t" style="left:59px;top:428.46px;font-size:16px;line-height:16px;color:#000;font-family:'Liberation Sans', sans-serif;">L...</div>
<div class="t" style="left:-483px;width:600px;text-align:right;top:428.46px;font-size:16px;line-height:16px;color:#000;font-family:'Liberation Sans', sans-serif;">-</div>
<div class="t" style="left:129px;top:428.46px;font-size:16px;line-height:16px;color:#000;font-family:'Liberation Sans', sans-serif;">21157893....</div>
<div class="t" style="left:229px;top:428.46px;font-size:16px;line-height:16px;color:#000;font-family:'Liberation Sans', sans-serif;">11118550...</div>
<div class="t" style="left:328px;top:428.46px;font-size:16px;line-height:16px;color:#000;font-family:'Liberation Sans', sans-serif;">173...</div>
<div class="t" style="left:383px;top:428.46px;font-size:16px;line-height:16px;color:#000;font-family:'Liberation Sans', sans-serif;">645...</div>
<div class="t" style="left:-132px;width:600px;text-align:right;top:428.46px;font-size:16px;line-height:16px;color:#000;font-family:'Liberation Sans', sans-serif;">50</div>
<div class="t" style="left:-77px;width:600px;text-align:right;top:428.46px;font-size:16px;line-height:16px;color:#000;font-family:'Liberation Sans', sans-serif;">0.32</div>
<div class="t" style="left:-23px;width:600px;text-align:right;top:428.46px;font-size:16px;line-height:16px;color:#000;font-family:'Liberation Sans', sans-serif;">0.004</div>
<div class="t" style="left:32.5px;width:600px;text-align:right;top:428.46px;font-size:16px;line-height:16px;color:#000;font-family:'Liberation Sans', sans-serif;">0.128</div>
<svg style="position:absolute;left:638px;top:428px" width="7" height="7"><use href="#dot"/></svg>
<div class="t" style="left:651px;top:428.46px;width:16px;overflow:hidden;font-size:16px;line-height:16px">Y<span style='margin-left:2px'>.</span></div>
<svg style="position:absolute;left:668px;top:428px" width="7" height="7"><use href="#dot"/></svg>
<div class="t" style="left:681px;top:428.46px;width:16px;overflow:hidden;font-size:16px;line-height:16px">Y<span style='margin-left:2px'>.</span></div>
<svg style="position:absolute;left:698px;top:428px" width="7" height="7"><use href="#dot"/></svg>
<div class="t" style="left:711px;top:428.46px;width:47px;overflow:hidden;font-size:16px;line-height:16px">Y<span style='margin-left:1px'>...</span></div>
<div class="t" style="left:25px;top:449.46px;font-size:16px;line-height:16px;color:#000;font-family:'Liberation Sans', sans-serif;">R...</div>
<div class="t" style="left:59px;top:449.46px;font-size:16px;line-height:16px;color:#000;font-family:'Liberation Sans', sans-serif;">L...</div>
<div class="t" style="left:-483px;width:600px;text-align:right;top:449.46px;font-size:16px;line-height:16px;color:#000;font-family:'Liberation Sans', sans-serif;">4</div>
<div class="t" style="left:129px;top:449.46px;font-size:16px;line-height:16px;color:#000;font-family:'Liberation Sans', sans-serif;">19875765....</div>
<div class="t" style="left:229px;top:449.46px;font-size:16px;line-height:16px;color:#000;font-family:'Liberation Sans', sans-serif;">10635928...</div>
<div class="t" style="left:328px;top:449.46px;font-size:16px;line-height:16px;color:#000;font-family:'Liberation Sans', sans-serif;">310...</div>
<div class="t" style="left:383px;top:449.46px;font-size:16px;line-height:16px;color:#000;font-family:'Liberation Sans', sans-serif;">645...</div>
<div class="t" style="left:-132px;width:600px;text-align:right;top:449.46px;font-size:16px;line-height:16px;color:#000;font-family:'Liberation Sans', sans-serif;">52</div>
<div class="t" style="left:-77px;width:600px;text-align:right;top:449.46px;font-size:16px;line-height:16px;color:#000;font-family:'Liberation Sans', sans-serif;">0.32</div>
<div class="t" style="left:-23px;width:600px;text-align:right;top:449.46px;font-size:16px;line-height:16px;color:#000;font-family:'Liberation Sans', sans-serif;">0.004</div>
<div class="t" style="left:32.5px;width:600px;text-align:right;top:449.46px;font-size:16px;line-height:16px;color:#000;font-family:'Liberation Sans', sans-serif;">0.128</div>
<svg style="position:absolute;left:638px;top:449px" width="7" height="7"><use href="#dot"/></svg>
<div class="t" style="left:651px;top:449.46px;width:16px;overflow:hidden;font-size:16px;line-height:16px">Y<span style='margin-left:2px'>.</span></div>
<svg style="position:absolute;left:668px;top:449px" width="7" height="7"><use href="#dot"/></svg>
<div class="t" style="left:681px;top:449.46px;width:16px;overflow:hidden;font-size:16px;line-height:16px">Y<span style='margin-left:2px'>.</span></div>
<svg style="position:absolute;left:698px;top:449px" width="7" height="7"><use href="#dot"/></svg>
<div class="t" style="left:711px;top:449.46px;width:47px;overflow:hidden;font-size:16px;line-height:16px">Y<span style='margin-left:1px'>...</span></div>
<div class="t" style="left:25px;top:470.46px;font-size:16px;line-height:16px;color:#000;font-family:'Liberation Sans', sans-serif;">G...</div>
<div class="t" style="left:59px;top:470.46px;font-size:16px;line-height:16px;color:#000;font-family:'Liberation Sans', sans-serif;">L...</div>
<div class="t" style="left:-483px;width:600px;text-align:right;top:470.46px;font-size:16px;line-height:16px;color:#000;font-family:'Liberation Sans', sans-serif;">-</div>
<div class="t" style="left:129px;top:470.46px;font-size:16px;line-height:16px;color:#000;font-family:'Liberation Sans', sans-serif;">21942499....</div>
<div class="t" style="left:229px;top:470.46px;font-size:16px;line-height:16px;color:#000;font-family:'Liberation Sans', sans-serif;">11530863...</div>
<div class="t" style="left:328px;top:470.46px;font-size:16px;line-height:16px;color:#000;font-family:'Liberation Sans', sans-serif;">386...</div>
<div class="t" style="left:383px;top:470.46px;font-size:16px;line-height:16px;color:#000;font-family:'Liberation Sans', sans-serif;">645...</div>
<div class="t" style="left:-132px;width:600px;text-align:right;top:470.46px;font-size:16px;line-height:16px;color:#000;font-family:'Liberation Sans', sans-serif;">48</div>
<div class="t" style="left:-77px;width:600px;text-align:right;top:470.46px;font-size:16px;line-height:16px;color:#000;font-family:'Liberation Sans', sans-serif;">0.32</div>
<div class="t" style="left:-23px;width:600px;text-align:right;top:470.46px;font-size:16px;line-height:16px;color:#000;font-family:'Liberation Sans', sans-serif;">0.004</div>
<div class="t" style="left:32.5px;width:600px;text-align:right;top:470.46px;font-size:16px;line-height:16px;color:#000;font-family:'Liberation Sans', sans-serif;">0.128</div>
<svg style="position:absolute;left:638px;top:470px" width="7" height="7"><use href="#dot"/></svg>
<div class="t" style="left:651px;top:470.46px;width:16px;overflow:hidden;font-size:16px;line-height:16px">Y<span style='margin-left:2px'>.</span></div>
<svg style="position:absolute;left:668px;top:470px" width="7" height="7"><use href="#dot"/></svg>
<div class="t" style="left:681px;top:470.46px;width:16px;overflow:hidden;font-size:16px;line-height:16px">Y<span style='margin-left:2px'>.</span></div>
<svg style="position:absolute;left:698px;top:470px" width="7" height="7"><use href="#dot"/></svg>
<div class="t" style="left:711px;top:470.46px;width:47px;overflow:hidden;font-size:16px;line-height:16px">Y<span style='margin-left:1px'>...</span></div>
<div class="t" style="left:25px;top:491.46px;font-size:16px;line-height:16px;color:#000;font-family:'Liberation Sans', sans-serif;">G...</div>
<div class="t" style="left:59px;top:491.46px;font-size:16px;line-height:16px;color:#000;font-family:'Liberation Sans', sans-serif;">L...</div>
<div class="t" style="left:-483px;width:600px;text-align:right;top:491.46px;font-size:16px;line-height:16px;color:#000;font-family:'Liberation Sans', sans-serif;">-</div>
<div class="t" style="left:129px;top:491.46px;font-size:16px;line-height:16px;color:#000;font-family:'Liberation Sans', sans-serif;">24614260....</div>
<div class="t" style="left:229px;top:491.46px;font-size:16px;line-height:16px;color:#000;font-family:'Liberation Sans', sans-serif;">12934881...</div>
<div class="t" style="left:328px;top:491.46px;font-size:16px;line-height:16px;color:#000;font-family:'Liberation Sans', sans-serif;">114...</div>
<div class="t" style="left:383px;top:491.46px;font-size:16px;line-height:16px;color:#000;font-family:'Liberation Sans', sans-serif;">645...</div>
<div class="t" style="left:-132px;width:600px;text-align:right;top:491.46px;font-size:16px;line-height:16px;color:#000;font-family:'Liberation Sans', sans-serif;">41</div>
<div class="t" style="left:-77px;width:600px;text-align:right;top:491.46px;font-size:16px;line-height:16px;color:#000;font-family:'Liberation Sans', sans-serif;">0.32</div>
<div class="t" style="left:-23px;width:600px;text-align:right;top:491.46px;font-size:16px;line-height:16px;color:#000;font-family:'Liberation Sans', sans-serif;">0.004</div>
<div class="t" style="left:32.5px;width:600px;text-align:right;top:491.46px;font-size:16px;line-height:16px;color:#000;font-family:'Liberation Sans', sans-serif;">0.128</div>
<svg style="position:absolute;left:638px;top:491px" width="7" height="7"><use href="#dot"/></svg>
<div class="t" style="left:651px;top:491.46px;width:16px;overflow:hidden;font-size:16px;line-height:16px">Y<span style='margin-left:2px'>.</span></div>
<svg style="position:absolute;left:668px;top:491px" width="7" height="7"><use href="#dot"/></svg>
<div class="t" style="left:681px;top:491.46px;width:16px;overflow:hidden;font-size:16px;line-height:16px">Y<span style='margin-left:2px'>.</span></div>
<svg style="position:absolute;left:698px;top:491px" width="7" height="7"><use href="#dot"/></svg>
<div class="t" style="left:711px;top:491.46px;width:47px;overflow:hidden;font-size:16px;line-height:16px">Y<span style='margin-left:1px'>...</span></div>
<div class="t" style="left:25px;top:512.46px;font-size:16px;line-height:16px;color:#000;font-family:'Liberation Sans', sans-serif;">G...</div>
<div class="t" style="left:59px;top:512.46px;font-size:16px;line-height:16px;color:#000;font-family:'Liberation Sans', sans-serif;">L...</div>
<div class="t" style="left:-483px;width:600px;text-align:right;top:512.46px;font-size:16px;line-height:16px;color:#000;font-family:'Liberation Sans', sans-serif;">-</div>
<div class="t" style="left:129px;top:512.46px;font-size:16px;line-height:16px;color:#000;font-family:'Liberation Sans', sans-serif;">24085327....</div>
<div class="t" style="left:229px;top:512.46px;font-size:16px;line-height:16px;color:#000;font-family:'Liberation Sans', sans-serif;">12656927...</div>
<div class="t" style="left:328px;top:512.46px;font-size:16px;line-height:16px;color:#000;font-family:'Liberation Sans', sans-serif;">197...</div>
<div class="t" style="left:383px;top:512.46px;font-size:16px;line-height:16px;color:#000;font-family:'Liberation Sans', sans-serif;">645...</div>
<div class="t" style="left:-132px;width:600px;text-align:right;top:512.46px;font-size:16px;line-height:16px;color:#000;font-family:'Liberation Sans', sans-serif;">47</div>
<div class="t" style="left:-77px;width:600px;text-align:right;top:512.46px;font-size:16px;line-height:16px;color:#000;font-family:'Liberation Sans', sans-serif;">0.32</div>
<div class="t" style="left:-23px;width:600px;text-align:right;top:512.46px;font-size:16px;line-height:16px;color:#000;font-family:'Liberation Sans', sans-serif;">0.004</div>
<div class="t" style="left:32.5px;width:600px;text-align:right;top:512.46px;font-size:16px;line-height:16px;color:#000;font-family:'Liberation Sans', sans-serif;">0.128</div>
<svg style="position:absolute;left:638px;top:512px" width="7" height="7"><use href="#dot"/></svg>
<div class="t" style="left:651px;top:512.46px;width:16px;overflow:hidden;font-size:16px;line-height:16px">Y<span style='margin-left:2px'>.</span></div>
<svg style="position:absolute;left:668px;top:512px" width="7" height="7"><use href="#dot"/></svg>
<div class="t" style="left:681px;top:512.46px;width:16px;overflow:hidden;font-size:16px;line-height:16px">Y<span style='margin-left:2px'>.</span></div>
<svg style="position:absolute;left:698px;top:512px" width="7" height="7"><use href="#dot"/></svg>
<div class="t" style="left:711px;top:512.46px;width:47px;overflow:hidden;font-size:16px;line-height:16px">Y<span style='margin-left:1px'>...</span></div>
<div class="t" style="left:25px;top:533.46px;font-size:16px;line-height:16px;color:#000;font-family:'Liberation Sans', sans-serif;">R...</div>
<div class="t" style="left:59px;top:533.46px;font-size:16px;line-height:16px;color:#000;font-family:'Liberation Sans', sans-serif;">L...</div>
<div class="t" style="left:-483px;width:600px;text-align:right;top:533.46px;font-size:16px;line-height:16px;color:#000;font-family:'Liberation Sans', sans-serif;">-4</div>
<div class="t" style="left:129px;top:533.46px;font-size:16px;line-height:16px;color:#000;font-family:'Liberation Sans', sans-serif;">22828929....</div>
<div class="t" style="left:229px;top:533.46px;font-size:16px;line-height:16px;color:#000;font-family:'Liberation Sans', sans-serif;">12181955...</div>
<div class="t" style="left:328px;top:533.46px;font-size:16px;line-height:16px;color:#000;font-family:'Liberation Sans', sans-serif;">555...</div>
<div class="t" style="left:383px;top:533.46px;font-size:16px;line-height:16px;color:#000;font-family:'Liberation Sans', sans-serif;">645...</div>
<div class="t" style="left:-132px;width:600px;text-align:right;top:533.46px;font-size:16px;line-height:16px;color:#000;font-family:'Liberation Sans', sans-serif;">50</div>
<div class="t" style="left:-77px;width:600px;text-align:right;top:533.46px;font-size:16px;line-height:16px;color:#000;font-family:'Liberation Sans', sans-serif;">0.32</div>
<div class="t" style="left:-23px;width:600px;text-align:right;top:533.46px;font-size:16px;line-height:16px;color:#000;font-family:'Liberation Sans', sans-serif;">0.004</div>
<div class="t" style="left:32.5px;width:600px;text-align:right;top:533.46px;font-size:16px;line-height:16px;color:#000;font-family:'Liberation Sans', sans-serif;">0.128</div>
<svg style="position:absolute;left:638px;top:533px" width="7" height="7"><use href="#dot"/></svg>
<div class="t" style="left:651px;top:533.46px;width:16px;overflow:hidden;font-size:16px;line-height:16px">Y<span style='margin-left:2px'>.</span></div>
<svg style="position:absolute;left:668px;top:533px" width="7" height="7"><use href="#dot"/></svg>
<div class="t" style="left:681px;top:533.46px;width:16px;overflow:hidden;font-size:16px;line-height:16px">Y<span style='margin-left:2px'>.</span></div>
<svg style="position:absolute;left:698px;top:533px" width="7" height="7"><use href="#dot"/></svg>
<div class="t" style="left:711px;top:533.46px;width:47px;overflow:hidden;font-size:16px;line-height:16px">Y<span style='margin-left:1px'>...</span></div>
<div class="t" style="left:25px;top:554.46px;font-size:16px;line-height:16px;color:#000;font-family:'Liberation Sans', sans-serif;">G...</div>
<div class="t" style="left:59px;top:554.46px;font-size:16px;line-height:16px;color:#000;font-family:'Liberation Sans', sans-serif;">L...</div>
<div class="t" style="left:-483px;width:600px;text-align:right;top:554.46px;font-size:16px;line-height:16px;color:#000;font-family:'Liberation Sans', sans-serif;">-</div>
<div class="t" style="left:129px;top:554.46px;font-size:16px;line-height:16px;color:#000;font-family:'Liberation Sans', sans-serif;">22602491....</div>
<div class="t" style="left:229px;top:554.46px;font-size:16px;line-height:16px;color:#000;font-family:'Liberation Sans', sans-serif;">11877690...</div>
<div class="t" style="left:328px;top:554.46px;font-size:16px;line-height:16px;color:#000;font-family:'Liberation Sans', sans-serif;">411...</div>
<div class="t" style="left:383px;top:554.46px;font-size:16px;line-height:16px;color:#000;font-family:'Liberation Sans', sans-serif;">645...</div>
<div class="t" style="left:-132px;width:600px;text-align:right;top:554.46px;font-size:16px;line-height:16px;color:#000;font-family:'Liberation Sans', sans-serif;">46</div>
<div class="t" style="left:-77px;width:600px;text-align:right;top:554.46px;font-size:16px;line-height:16px;color:#000;font-family:'Liberation Sans', sans-serif;">0.32</div>
<div class="t" style="left:-23px;width:600px;text-align:right;top:554.46px;font-size:16px;line-height:16px;color:#000;font-family:'Liberation Sans', sans-serif;">0.004</div>
<div class="t" style="left:32.5px;width:600px;text-align:right;top:554.46px;font-size:16px;line-height:16px;color:#000;font-family:'Liberation Sans', sans-serif;">0.128</div>
<svg style="position:absolute;left:638px;top:554px" width="7" height="7"><use href="#dot"/></svg>
<div class="t" style="left:651px;top:554.46px;width:16px;overflow:hidden;font-size:16px;line-height:16px">Y<span style='margin-left:2px'>.</span></div>
<svg style="position:absolute;left:668px;top:554px" width="7" height="7"><use href="#dot"/></svg>
<div class="t" style="left:681px;top:554.46px;width:16px;overflow:hidden;font-size:16px;line-height:16px">Y<span style='margin-left:2px'>.</span></div>
<svg style="position:absolute;left:698px;top:554px" width="7" height="7"><use href="#dot"/></svg>
<div class="t" style="left:711px;top:554.46px;width:47px;overflow:hidden;font-size:16px;line-height:16px">Y<span style='margin-left:1px'>...</span></div>
<div class="t" style="left:25px;top:575.46px;font-size:16px;line-height:16px;color:#000;font-family:'Liberation Sans', sans-serif;">G...</div>
<div class="t" style="left:59px;top:575.46px;font-size:16px;line-height:16px;color:#000;font-family:'Liberation Sans', sans-serif;">L...</div>
<div class="t" style="left:-483px;width:600px;text-align:right;top:575.46px;font-size:16px;line-height:16px;color:#000;font-family:'Liberation Sans', sans-serif;">-</div>
<div class="t" style="left:129px;top:575.46px;font-size:16px;line-height:16px;color:#000;font-family:'Liberation Sans', sans-serif;">23910196....</div>
<div class="t" style="left:229px;top:575.46px;font-size:16px;line-height:16px;color:#000;font-family:'Liberation Sans', sans-serif;">12564893...</div>
<div class="t" style="left:328px;top:575.46px;font-size:16px;line-height:16px;color:#000;font-family:'Liberation Sans', sans-serif;">121...</div>
<div class="t" style="left:383px;top:575.46px;font-size:16px;line-height:16px;color:#000;font-family:'Liberation Sans', sans-serif;">645...</div>
<div class="t" style="left:-132px;width:600px;text-align:right;top:575.46px;font-size:16px;line-height:16px;color:#000;font-family:'Liberation Sans', sans-serif;">47</div>
<div class="t" style="left:-77px;width:600px;text-align:right;top:575.46px;font-size:16px;line-height:16px;color:#000;font-family:'Liberation Sans', sans-serif;">0.32</div>
<div class="t" style="left:-23px;width:600px;text-align:right;top:575.46px;font-size:16px;line-height:16px;color:#000;font-family:'Liberation Sans', sans-serif;">0.004</div>
<div class="t" style="left:32.5px;width:600px;text-align:right;top:575.46px;font-size:16px;line-height:16px;color:#000;font-family:'Liberation Sans', sans-serif;">0.128</div>
<svg style="position:absolute;left:638px;top:575px" width="7" height="7"><use href="#dot"/></svg>
<div class="t" style="left:651px;top:575.46px;width:16px;overflow:hidden;font-size:16px;line-height:16px">Y<span style='margin-left:2px'>.</span></div>
<svg style="position:absolute;left:668px;top:575px" width="7" height="7"><use href="#dot"/></svg>
<div class="t" style="left:681px;top:575.46px;width:16px;overflow:hidden;font-size:16px;line-height:16px">Y<span style='margin-left:2px'>.</span></div>
<svg style="position:absolute;left:698px;top:575px" width="7" height="7"><use href="#dot"/></svg>
<div class="t" style="left:711px;top:575.46px;width:47px;overflow:hidden;font-size:16px;line-height:16px">Y<span style='margin-left:1px'>...</span></div>
<div class="t" style="left:25px;top:596.46px;font-size:16px;line-height:16px;color:#000;font-family:'Liberation Sans', sans-serif;">S...</div>
<div class="t" style="left:59px;top:596.46px;font-size:16px;line-height:16px;color:#000;font-family:'Liberation Sans', sans-serif;">L...</div>
<div class="t" style="left:-483px;width:600px;text-align:right;top:596.46px;font-size:16px;line-height:16px;color:#000;font-family:'Liberation Sans', sans-serif;">-</div>
<div class="t" style="left:129px;top:596.46px;font-size:16px;line-height:16px;color:#000;font-family:'Liberation Sans', sans-serif;">38350743....</div>
<div class="t" style="left:229px;top:596.46px;font-size:16px;line-height:16px;color:#000;font-family:'Liberation Sans', sans-serif;">20153452...</div>
<div class="t" style="left:332px;top:596.46px;font-size:16px;line-height:16px;color:#000;font-family:'Liberation Sans', sans-serif;">962.6</div>
<div class="t" style="left:383px;top:596.46px;font-size:16px;line-height:16px;color:#000;font-family:'Liberation Sans', sans-serif;">645...</div>
<div class="t" style="left:-132px;width:600px;text-align:right;top:596.46px;font-size:16px;line-height:16px;color:#000;font-family:'Liberation Sans', sans-serif;">42</div>
<div class="t" style="left:-77px;width:600px;text-align:right;top:596.46px;font-size:16px;line-height:16px;color:#000;font-family:'Liberation Sans', sans-serif;">0.32</div>
<div class="t" style="left:-23px;width:600px;text-align:right;top:596.46px;font-size:16px;line-height:16px;color:#000;font-family:'Liberation Sans', sans-serif;">0.004</div>
<div class="t" style="left:32.5px;width:600px;text-align:right;top:596.46px;font-size:16px;line-height:16px;color:#000;font-family:'Liberation Sans', sans-serif;">0.128</div>
<svg style="position:absolute;left:638px;top:596px" width="7" height="7"><use href="#dot"/></svg>
<div class="t" style="left:651px;top:596.46px;width:16px;overflow:hidden;font-size:16px;line-height:16px">Y<span style='margin-left:2px'>.</span></div>
<svg style="position:absolute;left:668px;top:596px" width="7" height="7"><use href="#dot"/></svg>
<div class="t" style="left:681px;top:596.46px;width:16px;overflow:hidden;font-size:16px;line-height:16px">Y<span style='margin-left:2px'>.</span></div>
<svg style="position:absolute;left:698px;top:596px" width="7" height="7"><use href="#dot"/></svg>
<div class="t" style="left:711px;top:596.46px;width:47px;overflow:hidden;font-size:16px;line-height:16px">Y<span style='margin-left:1px'>...</span></div>
<div class="t" style="left:25px;top:617.46px;font-size:16px;line-height:16px;color:#000;font-family:'Liberation Sans', sans-serif;">G...</div>
<div class="t" style="left:59px;top:617.46px;font-size:16px;line-height:16px;color:#000;font-family:'Liberation Sans', sans-serif;">L...</div>
<div class="t" style="left:-483px;width:600px;text-align:right;top:617.46px;font-size:16px;line-height:16px;color:#000;font-family:'Liberation Sans', sans-serif;">-</div>
<div class="t" style="left:129px;top:617.46px;font-size:16px;line-height:16px;color:#000;font-family:'Liberation Sans', sans-serif;">25096226....</div>
<div class="t" style="left:229px;top:617.46px;font-size:16px;line-height:16px;color:#000;font-family:'Liberation Sans', sans-serif;">13188156...</div>
<div class="t" style="left:328px;top:617.46px;font-size:16px;line-height:16px;color:#000;font-family:'Liberation Sans', sans-serif;">277...</div>
<div class="t" style="left:383px;top:617.46px;font-size:16px;line-height:16px;color:#000;font-family:'Liberation Sans', sans-serif;">645...</div>
<div class="t" style="left:-132px;width:600px;text-align:right;top:617.46px;font-size:16px;line-height:16px;color:#000;font-family:'Liberation Sans', sans-serif;">44</div>
<div class="t" style="left:-77px;width:600px;text-align:right;top:617.46px;font-size:16px;line-height:16px;color:#000;font-family:'Liberation Sans', sans-serif;">0.32</div>
<div class="t" style="left:-23px;width:600px;text-align:right;top:617.46px;font-size:16px;line-height:16px;color:#000;font-family:'Liberation Sans', sans-serif;">0.004</div>
<div class="t" style="left:32.5px;width:600px;text-align:right;top:617.46px;font-size:16px;line-height:16px;color:#000;font-family:'Liberation Sans', sans-serif;">0.128</div>
<svg style="position:absolute;left:638px;top:617px" width="7" height="7"><use href="#dot"/></svg>
<div class="t" style="left:651px;top:617.46px;width:16px;overflow:hidden;font-size:16px;line-height:16px">Y<span style='margin-left:2px'>.</span></div>
<svg style="position:absolute;left:668px;top:617px" width="7" height="7"><use href="#dot"/></svg>
<div class="t" style="left:681px;top:617.46px;width:16px;overflow:hidden;font-size:16px;line-height:16px">Y<span style='margin-left:2px'>.</span></div>
<svg style="position:absolute;left:698px;top:617px" width="7" height="7"><use href="#dot"/></svg>
<div class="t" style="left:711px;top:617.46px;width:47px;overflow:hidden;font-size:16px;line-height:16px">Y<span style='margin-left:1px'>...</span></div>
<div class="t" style="left:25px;top:638.46px;font-size:16px;line-height:16px;color:#000;font-family:'Liberation Sans', sans-serif;">S...</div>
<div class="t" style="left:59px;top:638.46px;font-size:16px;line-height:16px;color:#000;font-family:'Liberation Sans', sans-serif;">L...</div>
<div class="t" style="left:-483px;width:600px;text-align:right;top:638.46px;font-size:16px;line-height:16px;color:#000;font-family:'Liberation Sans', sans-serif;">-</div>
<div class="t" style="left:129px;top:638.46px;font-size:16px;line-height:16px;color:#000;font-family:'Liberation Sans', sans-serif;">38576686....</div>
<div class="t" style="left:229px;top:638.46px;font-size:16px;line-height:16px;color:#000;font-family:'Liberation Sans', sans-serif;">20272186...</div>
<div class="t" style="left:328px;top:638.46px;font-size:16px;line-height:16px;color:#000;font-family:'Liberation Sans', sans-serif;">105...</div>
<div class="t" style="left:383px;top:638.46px;font-size:16px;line-height:16px;color:#000;font-family:'Liberation Sans', sans-serif;">645...</div>
<div class="t" style="left:-132px;width:600px;text-align:right;top:638.46px;font-size:16px;line-height:16px;color:#000;font-family:'Liberation Sans', sans-serif;">41</div>
<div class="t" style="left:-77px;width:600px;text-align:right;top:638.46px;font-size:16px;line-height:16px;color:#000;font-family:'Liberation Sans', sans-serif;">0.32</div>
<div class="t" style="left:-23px;width:600px;text-align:right;top:638.46px;font-size:16px;line-height:16px;color:#000;font-family:'Liberation Sans', sans-serif;">0.004</div>
<div class="t" style="left:32.5px;width:600px;text-align:right;top:638.46px;font-size:16px;line-height:16px;color:#000;font-family:'Liberation Sans', sans-serif;">0.128</div>
<svg style="position:absolute;left:638px;top:638px" width="7" height="7"><use href="#dot"/></svg>
<div class="t" style="left:651px;top:638.46px;width:16px;overflow:hidden;font-size:16px;line-height:16px">Y<span style='margin-left:2px'>.</span></div>
<svg style="position:absolute;left:668px;top:638px" width="7" height="7"><use href="#dot"/></svg>
<div class="t" style="left:681px;top:638.46px;width:16px;overflow:hidden;font-size:16px;line-height:16px">Y<span style='margin-left:2px'>.</span></div>
<svg style="position:absolute;left:698px;top:638px" width="7" height="7"><use href="#dot"/></svg>
<div class="t" style="left:711px;top:638.46px;width:47px;overflow:hidden;font-size:16px;line-height:16px">Y<span style='margin-left:1px'>...</span></div>
<div class="t" style="left:25px;top:659.46px;font-size:16px;line-height:16px;color:#000;font-family:'Liberation Sans', sans-serif;">S...</div>
<div class="t" style="left:59px;top:659.46px;font-size:16px;line-height:16px;color:#000;font-family:'Liberation Sans', sans-serif;">L...</div>
<div class="t" style="left:-483px;width:600px;text-align:right;top:659.46px;font-size:16px;line-height:16px;color:#000;font-family:'Liberation Sans', sans-serif;">-</div>
<div class="t" style="left:129px;top:659.46px;font-size:16px;line-height:16px;color:#000;font-family:'Liberation Sans', sans-serif;">38229207....</div>
<div class="t" style="left:229px;top:659.46px;font-size:16px;line-height:16px;color:#000;font-family:'Liberation Sans', sans-serif;">20089584...</div>
<div class="t" style="left:328px;top:659.46px;font-size:16px;line-height:16px;color:#000;font-family:'Liberation Sans', sans-serif;">104...</div>
<div class="t" style="left:383px;top:659.46px;font-size:16px;line-height:16px;color:#000;font-family:'Liberation Sans', sans-serif;">645...</div>
<div class="t" style="left:-132px;width:600px;text-align:right;top:659.46px;font-size:16px;line-height:16px;color:#000;font-family:'Liberation Sans', sans-serif;">42</div>
<div class="t" style="left:-77px;width:600px;text-align:right;top:659.46px;font-size:16px;line-height:16px;color:#000;font-family:'Liberation Sans', sans-serif;">0.32</div>
<div class="t" style="left:-23px;width:600px;text-align:right;top:659.46px;font-size:16px;line-height:16px;color:#000;font-family:'Liberation Sans', sans-serif;">0.004</div>
<div class="t" style="left:32.5px;width:600px;text-align:right;top:659.46px;font-size:16px;line-height:16px;color:#000;font-family:'Liberation Sans', sans-serif;">0.128</div>
<svg style="position:absolute;left:638px;top:659px" width="7" height="7"><use href="#dot"/></svg>
<div class="t" style="left:651px;top:659.46px;width:16px;overflow:hidden;font-size:16px;line-height:16px">Y<span style='margin-left:2px'>.</span></div>
<svg style="position:absolute;left:668px;top:659px" width="7" height="7"><use href="#dot"/></svg>
<div class="t" style="left:681px;top:659.46px;width:16px;overflow:hidden;font-size:16px;line-height:16px">Y<span style='margin-left:2px'>.</span></div>
<svg style="position:absolute;left:698px;top:659px" width="7" height="7"><use href="#dot"/></svg>
<div class="t" style="left:711px;top:659.46px;width:47px;overflow:hidden;font-size:16px;line-height:16px">Y<span style='margin-left:1px'>...</span></div>
<div style="left:975px;top:147px;width:1px;height:627px;background:#ffffff;"></div>
<div style="left:976px;top:147px;width:25px;height:627px;background:#f0f0f0;"></div>
<div style="left:976px;top:173px;width:24px;height:403px;background:#cdcdcd;"></div>
<div style="left:0px;top:794px;width:1020px;height:1px;background:#ffffff;"></div>
<div style="left:0px;top:798px;width:1020px;height:1px;background:#a0a0a0;"></div>
<div style="left:0px;top:799px;width:1020px;height:1px;background:#696969;"></div>
<div style="left:0px;top:800px;width:1020px;height:45px;background:#ffffff;"></div>
<div style="left:0px;top:845px;width:1020px;height:1px;background:#ffffff;"></div>
<div style="left:994px;top:800px;width:26px;height:44px;background:#f0f0f0;"></div>
<div style="left:0px;top:844px;width:1020px;height:1px;background:#e3e3e3;"></div>
<div class="t" style="left:0px;top:802.33px;font-size:20px;line-height:20px;color:#000;font-family:'Liberation Mono', monospace;white-space:pre">0000&nbsp;&nbsp;B5&nbsp;62&nbsp;02&nbsp;15&nbsp;10&nbsp;03&nbsp;B5&nbsp;C2&nbsp;89&nbsp;F8&nbsp;5F&nbsp;85&nbsp;EC&nbsp;40&nbsp;3D&nbsp;07&nbsp;11&nbsp;18&nbsp;&nbsp;µb<svg width="9" height="14" style="vertical-align:-3px" fill="none" stroke="#000" stroke-width="1.1"><ellipse cx="3" cy="11.2" rx="2.5" ry="2" transform="rotate(-20 3 11.2)"/><path d="M5.4 10.6 L6.9 1 L8.8 1.5 L8.3 4.5"/></svg><svg width="9" height="14" style="vertical-align:-3px" fill="none" stroke="#000" stroke-width="1.1"><ellipse cx="3" cy="11.2" rx="2.5" ry="2" transform="rotate(-20 3 11.2)"/><path d="M5.4 10.6 L6.9 1 L8.8 1.5 L8.3 4.5"/></svg><svg width="9" height="14" style="vertical-align:-3px" fill="none" stroke="#000" stroke-width="1.1"><ellipse cx="3" cy="11.2" rx="2.5" ry="2" transform="rotate(-20 3 11.2)"/><path d="M5.4 10.6 L6.9 1 L8.8 1.5 L8.3 4.5"/></svg><svg width="9" height="14" style="vertical-align:-3px" fill="none" stroke="#000" stroke-width="1.1"><ellipse cx="3" cy="11.2" rx="2.5" ry="2" transform="rotate(-20 3 11.2)"/><path d="M5.4 10.6 L6.9 1 L8.8 1.5 L8.3 4.5"/></svg>µÂ<svg width="9" height="14" style="vertical-align:-3px" fill="none" stroke="#000" stroke-width="1.1"><ellipse cx="3" cy="11.2" rx="2.5" ry="2" transform="rotate(-20 3 11.2)"/><path d="M5.4 10.6 L6.9 1 L8.8 1.5 L8.3 4.5"/></svg>ø_<svg width="9" height="14" style="vertical-align:-3px" fill="none" stroke="#000" stroke-width="1.1"><ellipse cx="3" cy="11.2" rx="2.5" ry="2" transform="rotate(-20 3 11.2)"/><path d="M5.4 10.6 L6.9 1 L8.8 1.5 L8.3 4.5"/></svg>ì@=<svg width="9" height="14" style="vertical-align:-3px" fill="none" stroke="#000" stroke-width="1.1"><ellipse cx="3" cy="11.2" rx="2.5" ry="2" transform="rotate(-20 3 11.2)"/><path d="M5.4 10.6 L6.9 1 L8.8 1.5 L8.3 4.5"/></svg><svg width="9" height="14" style="vertical-align:-3px" fill="none" stroke="#000" stroke-width="1.1"><ellipse cx="3" cy="11.2" rx="2.5" ry="2" transform="rotate(-20 3 11.2)"/><path d="M5.4 10.6 L6.9 1 L8.8 1.5 L8.3 4.5"/></svg><svg width="9" height="14" style="vertical-align:-3px" fill="none" stroke="#000" stroke-width="1.1"><ellipse cx="3" cy="11.2" rx="2.5" ry="2" transform="rotate(-20 3 11.2)"/><path d="M5.4 10.6 L6.9 1 L8.8 1.5 L8.3 4.5"/></svg></div>
<div class="t" style="left:0px;top:824.33px;font-size:20px;line-height:20px;color:#000;font-family:'Liberation Mono', monospace;white-space:pre">0012&nbsp;&nbsp;01&nbsp;00&nbsp;00&nbsp;00&nbsp;72&nbsp;51&nbsp;0B&nbsp;F9&nbsp;74&nbsp;2E&nbsp;76&nbsp;41&nbsp;45&nbsp;5F&nbsp;9C&nbsp;3A&nbsp;57&nbsp;8F&nbsp;&nbsp;<svg width="9" height="14" style="vertical-align:-3px" fill="none" stroke="#000" stroke-width="1.1"><ellipse cx="3" cy="11.2" rx="2.5" ry="2" transform="rotate(-20 3 11.2)"/><path d="M5.4 10.6 L6.9 1 L8.8 1.5 L8.3 4.5"/></svg><svg width="9" height="14" style="vertical-align:-3px" fill="none" stroke="#000" stroke-width="1.1"><ellipse cx="3" cy="11.2" rx="2.5" ry="2" transform="rotate(-20 3 11.2)"/><path d="M5.4 10.6 L6.9 1 L8.8 1.5 L8.3 4.5"/></svg><svg width="9" height="14" style="vertical-align:-3px" fill="none" stroke="#000" stroke-width="1.1"><ellipse cx="3" cy="11.2" rx="2.5" ry="2" transform="rotate(-20 3 11.2)"/><path d="M5.4 10.6 L6.9 1 L8.8 1.5 L8.3 4.5"/></svg><svg width="9" height="14" style="vertical-align:-3px" fill="none" stroke="#000" stroke-width="1.1"><ellipse cx="3" cy="11.2" rx="2.5" ry="2" transform="rotate(-20 3 11.2)"/><path d="M5.4 10.6 L6.9 1 L8.8 1.5 L8.3 4.5"/></svg>rQ<svg width="9" height="14" style="vertical-align:-3px" fill="none" stroke="#000" stroke-width="1.1"><ellipse cx="3" cy="11.2" rx="2.5" ry="2" transform="rotate(-20 3 11.2)"/><path d="M5.4 10.6 L6.9 1 L8.8 1.5 L8.3 4.5"/></svg>ùt.vAE_<svg width="9" height="14" style="vertical-align:-3px" fill="none" stroke="#000" stroke-width="1.1"><ellipse cx="3" cy="11.2" rx="2.5" ry="2" transform="rotate(-20 3 11.2)"/><path d="M5.4 10.6 L6.9 1 L8.8 1.5 L8.3 4.5"/></svg>:W<svg width="9" height="14" style="vertical-align:-3px" fill="none" stroke="#000" stroke-width="1.1"><ellipse cx="3" cy="11.2" rx="2.5" ry="2" transform="rotate(-20 3 11.2)"/><path d="M5.4 10.6 L6.9 1 L8.8 1.5 L8.3 4.5"/></svg></div>
<svg style="position:absolute;left:0;top:0" width="1475" height="869"><polygon points="983,162.5 988.5,157 994,162.5 994,166 988.5,160.5 983,166" fill="#606060"/><polygon points="983,757 988.5,762.5 994,757 994,760.5 988.5,766 983,760.5" fill="#606060"/><polygon points="1002,812.5 1006.5,808 1011,812.5 1011,815 1006.5,810.5 1002,815" fill="#606060"/><polygon points="1002,830 1006.5,834.5 1011,830 1011,832.5 1006.5,837 1002,832.5" fill="#606060"/></svg>
<div style="left:1020px;top:0px;width:1px;height:869px;background:#ffffff;"></div>
<div style="left:1025px;top:1px;width:434px;height:2px;background:#ffffff;"></div>
<div style="left:1025px;top:3px;width:434px;height:1px;background:#a0a0a0;"></div>
<div style="left:1025px;top:4px;width:434px;height:2px;background:#ffffff;"></div>
<div style="left:1025px;top:6px;width:434px;height:1px;background:#a0a0a0;"></div>
<div style="left:1459px;top:1px;width:1px;height:6px;background:#a0a0a0;"></div>
<svg style="position:absolute;left:1465px;top:2px" width="6" height="5" shape-rendering="crispEdges"><rect x="0" y="0" width="1" height="1"/><rect x="1" y="0" width="1" height="1"/><rect x="4" y="0" width="1" height="1"/><rect x="5" y="0" width="1" height="1"/><rect x="1" y="1" width="1" height="1"/><rect x="2" y="1" width="1" height="1"/><rect x="3" y="1" width="1" height="1"/><rect x="4" y="1" width="1" height="1"/><rect x="2" y="2" width="1" height="1"/><rect x="3" y="2" width="1" height="1"/><rect x="1" y="3" width="1" height="1"/><rect x="2" y="3" width="1" height="1"/><rect x="3" y="3" width="1" height="1"/><rect x="4" y="3" width="1" height="1"/><rect x="0" y="4" width="1" height="1"/><rect x="1" y="4" width="1" height="1"/><rect x="4" y="4" width="1" height="1"/><rect x="5" y="4" width="1" height="1"/></svg>
<div style="left:1024px;top:12px;width:450px;height:1px;background:#a0a0a0;"></div>
<div style="left:1024px;top:12px;width:1px;height:217px;background:#a0a0a0;"></div>
<div style="left:1025px;top:13px;width:448px;height:1px;background:#696969;"></div>
<div style="left:1025px;top:13px;width:1px;height:215px;background:#696969;"></div>
<div style="left:1024px;top:228px;width:450px;height:1px;background:#ffffff;"></div>
<div style="left:1473px;top:12px;width:1px;height:217px;background:#ffffff;"></div>
<div style="left:1025px;top:227px;width:448px;height:1px;background:#e3e3e3;"></div>
<div style="left:1472px;top:13px;width:1px;height:215px;background:#e3e3e3;"></div>
<div style="left:1026px;top:14px;width:446px;height:213px;background:#000000;"></div>
<div class="t" style="left:1031px;top:19.84px;font-size:12px;line-height:12px;color:#d0d0d0;font-family:'Liberation Sans', sans-serif;transform:scaleX(0.9);transform-origin:left top;">Longitude</div>
<div style="left:1104px;top:19px;width:363px;height:12px;background:#404040;"></div>
<div class="t" style="left:1031px;top:32.84px;font-size:12px;line-height:12px;color:#d0d0d0;font-family:'Liberation Sans', sans-serif;transform:scaleX(0.9);transform-origin:left top;">Latitude</div>
<div style="left:1104px;top:32px;width:363px;height:12px;background:#404040;"></div>
<div class="t" style="left:1031px;top:45.84px;font-size:12px;line-height:12px;color:#d0d0d0;font-family:'Liberation Sans', sans-serif;transform:scaleX(0.9);transform-origin:left top;">Altitude</div>
<div style="left:1104px;top:45px;width:363px;height:12px;background:#404040;"></div>
<div class="t" style="left:1031px;top:58.84px;font-size:12px;line-height:12px;color:#d0d0d0;font-family:'Liberation Sans', sans-serif;transform:scaleX(0.9);transform-origin:left top;">TTFF</div>
<div style="left:1104px;top:58px;width:363px;height:12px;background:#404040;"></div>
<div class="t" style="left:1031px;top:71.84px;font-size:12px;line-height:12px;color:#d0d0d0;font-family:'Liberation Sans', sans-serif;transform:scaleX(0.9);transform-origin:left top;">Fix Mode</div>
<div style="left:1104px;top:71px;width:363px;height:12px;background:#404040;"></div>
<div class="t" style="left:1031px;top:84.84px;font-size:12px;line-height:12px;color:#d0d0d0;font-family:'Liberation Sans', sans-serif;transform:scaleX(0.9);transform-origin:left top;">3D Acc.</div>
<div style="left:1104px;top:84px;width:363px;height:12px;background:#404040;"></div>
<div class="t" style="left:1031px;top:97.84px;font-size:12px;line-height:12px;color:#d0d0d0;font-family:'Liberation Sans', sans-serif;transform:scaleX(0.9);transform-origin:left top;">2D Acc.</div>
<div style="left:1104px;top:97px;width:363px;height:12px;background:#404040;"></div>
<div class="t" style="left:1031px;top:110.84px;font-size:12px;line-height:12px;color:#d0d0d0;font-family:'Liberation Sans', sans-serif;transform:scaleX(0.9);transform-origin:left top;">PDOP</div>
<div style="left:1104px;top:110px;width:363px;height:12px;background:#404040;"></div>
<div class="t" style="left:1031px;top:123.84px;font-size:12px;line-height:12px;color:#d0d0d0;font-family:'Liberation Sans', sans-serif;transform:scaleX(0.9);transform-origin:left top;">HDOP</div>
<div style="left:1104px;top:123px;width:363px;height:12px;background:#404040;"></div>
<div class="t" style="left:1031px;top:136.84px;font-size:12px;line-height:12px;color:#d0d0d0;font-family:'Liberation Sans', sans-serif;transform:scaleX(0.9);transform-origin:left top;">Satellites</div>
<div class="t" style="left:1267px;width:200px;text-align:right;top:19.84px;font-size:12px;line-height:12px;color:#d0d0d0;font-family:'Liberation Sans', sans-serif;transform:scaleX(0.9);transform-origin:right top;">12.702473 °</div>
<div class="t" style="left:1267px;width:200px;text-align:right;top:32.84px;font-size:12px;line-height:12px;color:#d0d0d0;font-family:'Liberation Sans', sans-serif;transform:scaleX(0.9);transform-origin:right top;">51.221506°</div>
<div class="t" style="left:1267px;width:200px;text-align:right;top:45.84px;font-size:12px;line-height:12px;color:#d0d0d0;font-family:'Liberation Sans', sans-serif;transform:scaleX(0.9);transform-origin:right top;">203.956 m</div>
<div class="t" style="left:1267px;width:200px;text-align:right;top:71.84px;font-size:12px;line-height:12px;color:#00e000;font-family:'Liberation Sans', sans-serif;transform:scaleX(0.9);transform-origin:right top;">3D/DGPS</div>
<div class="t" style="left:1105px;top:97.84px;font-size:12px;line-height:12px;color:#d0d0d0;font-family:'Liberation Sans', sans-serif;transform:scaleX(0.9);transform-origin:left top;">0</div>
<div style="left:1237px;top:98px;width:3px;height:10px;background:#00c000;"></div>
<div class="t" style="left:1240px;top:97.84px;font-size:12px;line-height:12px;color:#d0d0d0;font-family:'Liberation Sans', sans-serif;transform:scaleX(0.9);transform-origin:left top;">0.37m</div>
<div class="t" style="left:1417px;width:50px;text-align:right;top:97.84px;font-size:12px;line-height:12px;color:#d0d0d0;font-family:'Liberation Sans', sans-serif;transform:scaleX(0.9);transform-origin:right top;">1</div>
<div class="t" style="left:1105px;top:110.84px;font-size:12px;line-height:12px;color:#d0d0d0;font-family:'Liberation Sans', sans-serif;transform:scaleX(0.9);transform-origin:left top;">0</div>
<div style="left:1179px;top:111px;width:3px;height:10px;background:#00c000;"></div>
<div class="t" style="left:1182px;top:110.84px;font-size:12px;line-height:12px;color:#d0d0d0;font-family:'Liberation Sans', sans-serif;transform:scaleX(0.9);transform-origin:left top;">1.1</div>
<div class="t" style="left:1417px;width:50px;text-align:right;top:110.84px;font-size:12px;line-height:12px;color:#d0d0d0;font-family:'Liberation Sans', sans-serif;transform:scaleX(0.9);transform-origin:right top;">5</div>
<div class="t" style="left:1105px;top:123.84px;font-size:12px;line-height:12px;color:#d0d0d0;font-family:'Liberation Sans', sans-serif;transform:scaleX(0.9);transform-origin:left top;">0</div>
<div style="left:1143px;top:124px;width:3px;height:10px;background:#00c000;"></div>
<div class="t" style="left:1146px;top:123.84px;font-size:12px;line-height:12px;color:#d0d0d0;font-family:'Liberation Sans', sans-serif;transform:scaleX(0.9);transform-origin:left top;">0.6</div>
<div class="t" style="left:1417px;width:50px;text-align:right;top:123.84px;font-size:12px;line-height:12px;color:#d0d0d0;font-family:'Liberation Sans', sans-serif;transform:scaleX(0.9);transform-origin:right top;">5</div>
<div style="left:1104px;top:137px;width:12px;height:11px;background:#00c000;"></div>
<div style="left:1117px;top:137px;width:12px;height:11px;background:#00c000;"></div>
<div style="left:1130px;top:137px;width:12px;height:11px;background:#00c000;"></div>
<div style="left:1143px;top:137px;width:12px;height:11px;background:#00c000;"></div>
<div style="left:1158px;top:137px;width:12px;height:11px;background:#00c000;"></div>
<div style="left:1171px;top:137px;width:12px;height:11px;background:#00c000;"></div>
<div style="left:1184px;top:137px;width:12px;height:11px;background:#00c000;"></div>
<div style="left:1197px;top:137px;width:12px;height:11px;background:#00c000;"></div>
<div style="left:1212px;top:137px;width:12px;height:11px;background:#00c000;"></div>
<div style="left:1225px;top:137px;width:12px;height:11px;background:#00c000;"></div>
<div style="left:1238px;top:137px;width:12px;height:11px;background:#00c000;"></div>
<div style="left:1251px;top:137px;width:12px;height:11px;background:#00c000;"></div>
<div style="left:1266px;top:137px;width:12px;height:11px;background:#00c000;"></div>
<div style="left:1279px;top:137px;width:12px;height:11px;background:#00c000;"></div>
<div style="left:1292px;top:137px;width:12px;height:11px;background:#00c000;"></div>
<div style="left:1305px;top:137px;width:12px;height:11px;background:#00c000;"></div>
<div style="left:1320px;top:137px;width:12px;height:11px;background:#00c000;"></div>
<div style="left:1333px;top:137px;width:12px;height:11px;background:#00c000;"></div>
<div style="left:1346px;top:137px;width:12px;height:11px;background:#00c000;"></div>
<div style="left:1359px;top:137px;width:12px;height:11px;background:#00c000;"></div>
<div style="left:1374px;top:137px;width:12px;height:11px;background:#c8c8c8;"></div>
<div style="left:1387px;top:137px;width:12px;height:11px;background:#c8c8c8;"></div>
<div style="left:1400px;top:137px;width:12px;height:11px;background:#c8c8c8;"></div>
<div style="left:1413px;top:137px;width:12px;height:11px;background:#c8c8c8;"></div>
<div style="left:1428px;top:137px;width:12px;height:11px;background:#0000c0;"></div>
<div style="left:1441px;top:137px;width:12px;height:11px;background:#c8c8c8;"></div>
<div style="left:1454px;top:137px;width:12px;height:11px;background:#c8c8c8;"></div>
<div style="left:1021px;top:232px;width:454px;height:1px;background:#a0a0a0;"></div>
<div style="left:1021px;top:233px;width:454px;height:1px;background:#ffffff;"></div>
<div style="left:1025px;top:238px;width:434px;height:2px;background:#ffffff;"></div>
<div style="left:1025px;top:240px;width:434px;height:1px;background:#a0a0a0;"></div>
<div style="left:1025px;top:241px;width:434px;height:2px;background:#ffffff;"></div>
<div style="left:1025px;top:243px;width:434px;height:1px;background:#a0a0a0;"></div>
<div style="left:1459px;top:238px;width:1px;height:6px;background:#a0a0a0;"></div>
<svg style="position:absolute;left:1465px;top:239px" width="6" height="5" shape-rendering="crispEdges"><rect x="0" y="0" width="1" height="1"/><rect x="1" y="0" width="1" height="1"/><rect x="4" y="0" width="1" height="1"/><rect x="5" y="0" width="1" height="1"/><rect x="1" y="1" width="1" height="1"/><rect x="2" y="1" width="1" height="1"/><rect x="3" y="1" width="1" height="1"/><rect x="4" y="1" width="1" height="1"/><rect x="2" y="2" width="1" height="1"/><rect x="3" y="2" width="1" height="1"/><rect x="1" y="3" width="1" height="1"/><rect x="2" y="3" width="1" height="1"/><rect x="3" y="3" width="1" height="1"/><rect x="4" y="3" width="1" height="1"/><rect x="0" y="4" width="1" height="1"/><rect x="1" y="4" width="1" height="1"/><rect x="4" y="4" width="1" height="1"/><rect x="5" y="4" width="1" height="1"/></svg>
<div style="left:1024px;top:249px;width:450px;height:1px;background:#a0a0a0;"></div>
<div style="left:1024px;top:249px;width:1px;height:616px;background:#a0a0a0;"></div>
<div style="left:1025px;top:250px;width:448px;height:1px;background:#696969;"></div>
<div style="left:1025px;top:250px;width:1px;height:614px;background:#696969;"></div>
<div style="left:1024px;top:864px;width:450px;height:1px;background:#ffffff;"></div>
<div style="left:1473px;top:249px;width:1px;height:616px;background:#ffffff;"></div>
<div style="left:1025px;top:863px;width:448px;height:1px;background:#e3e3e3;"></div>
<div style="left:1472px;top:250px;width:1px;height:614px;background:#e3e3e3;"></div>
<div style="left:1026px;top:251px;width:446px;height:612px;background:#000000;"></div>
<svg style="position:absolute;left:0;top:0" width="1475" height="869" shape-rendering="crispEdges"><rect x="1027" y="348" width="15" height="499" fill="#00c000"/><rect x="1042" y="348" width="16" height="499" fill="#00c000"/><rect x="1058" y="360" width="16" height="487" fill="#00c000"/><rect x="1074" y="324" width="16" height="523" fill="#00c000"/><rect x="1090" y="396" width="16" height="451" fill="#00c000"/><rect x="1106" y="312" width="16" height="535" fill="#00c000"/><rect x="1122" y="336" width="16" height="511" fill="#00c000"/><rect x="1138" y="419" width="16" height="428" fill="#00c000"/><rect x="1154" y="348" width="16" height="499" fill="#00c000"/><rect x="1170" y="360" width="16" height="487" fill="#00c000"/><rect x="1186" y="348" width="16" height="499" fill="#00c000"/><rect x="1202" y="360" width="16" height="487" fill="#00c000"/><rect x="1218" y="348" width="16" height="499" fill="#00c000"/><rect x="1234" y="324" width="15" height="523" fill="#00c000"/><rect x="1249" y="312" width="16" height="535" fill="#00c000"/><rect x="1265" y="336" width="16" height="511" fill="#00c000"/><rect x="1281" y="348" width="16" height="499" fill="#00c000"/><rect x="1297" y="324" width="16" height="523" fill="#00c000"/><rect x="1313" y="288" width="16" height="559" fill="#00c000"/><rect x="1329" y="312" width="16" height="535" fill="#00c000"/><rect x="1409" y="407" width="16" height="440" fill="#0000c0"/><line x1="1027" y1="312.5" x2="1457" y2="312.5" stroke="#c8c8c8" stroke-width="1" stroke-dasharray="3 3"/><line x1="1027" y1="431.5" x2="1457" y2="431.5" stroke="#c8c8c8" stroke-width="1" stroke-dasharray="3 3"/><line x1="1027" y1="550.5" x2="1457" y2="550.5" stroke="#c8c8c8" stroke-width="1" stroke-dasharray="3 3"/><line x1="1027" y1="670.5" x2="1457" y2="670.5" stroke="#c8c8c8" stroke-width="1" stroke-dasharray="3 3"/><line x1="1027" y1="789.5" x2="1457" y2="789.5" stroke="#c8c8c8" stroke-width="1" stroke-dasharray="3 3"/><rect x="1027" y="347" width="16" height="1" fill="#c0c0c0"/><rect x="1042" y="347" width="17" height="1" fill="#c0c0c0"/><rect x="1058" y="359" width="17" height="1" fill="#c0c0c0"/><rect x="1074" y="323" width="17" height="1" fill="#c0c0c0"/><rect x="1074" y="311" width="17" height="1" fill="#c0c0c0"/><rect x="1090" y="395" width="17" height="1" fill="#c0c0c0"/><rect x="1106" y="311" width="17" height="1" fill="#c0c0c0"/><rect x="1122" y="335" width="17" height="1" fill="#c0c0c0"/><rect x="1122" y="323" width="17" height="1" fill="#c0c0c0"/><rect x="1138" y="418" width="17" height="1" fill="#c0c0c0"/><rect x="1138" y="442" width="17" height="1" fill="#c0c0c0"/><rect x="1154" y="347" width="17" height="1" fill="#c0c0c0"/><rect x="1154" y="359" width="17" height="1" fill="#c0c0c0"/><rect x="1170" y="359" width="17" height="1" fill="#c0c0c0"/><rect x="1186" y="347" width="17" height="1" fill="#c0c0c0"/><rect x="1186" y="359" width="17" height="1" fill="#c0c0c0"/><rect x="1202" y="359" width="17" height="1" fill="#c0c0c0"/><rect x="1218" y="347" width="17" height="1" fill="#c0c0c0"/><rect x="1234" y="323" width="16" height="1" fill="#c0c0c0"/><rect x="1234" y="335" width="16" height="1" fill="#c0c0c0"/><rect x="1249" y="311" width="17" height="1" fill="#c0c0c0"/><rect x="1265" y="335" width="17" height="1" fill="#c0c0c0"/><rect x="1281" y="347" width="17" height="1" fill="#c0c0c0"/><rect x="1281" y="335" width="17" height="1" fill="#c0c0c0"/><rect x="1297" y="323" width="17" height="1" fill="#c0c0c0"/><rect x="1313" y="287" width="17" height="1" fill="#c0c0c0"/><rect x="1313" y="299" width="17" height="1" fill="#c0c0c0"/><rect x="1329" y="311" width="17" height="1" fill="#c0c0c0"/><rect x="1409" y="406" width="17" height="1" fill="#c0c0c0"/><rect x="1409" y="395" width="17" height="1" fill="#c0c0c0"/><rect x="1027" y="252" width="1" height="596" fill="#c0c0c0"/><rect x="1042" y="252" width="1" height="596" fill="#c0c0c0"/><rect x="1058" y="252" width="1" height="596" fill="#c0c0c0"/><rect x="1074" y="252" width="1" height="596" fill="#c0c0c0"/><rect x="1090" y="252" width="1" height="596" fill="#c0c0c0"/><rect x="1106" y="252" width="1" height="596" fill="#c0c0c0"/><rect x="1122" y="252" width="1" height="596" fill="#c0c0c0"/><rect x="1138" y="252" width="1" height="596" fill="#c0c0c0"/><rect x="1154" y="252" width="1" height="596" fill="#c0c0c0"/><rect x="1170" y="252" width="1" height="596" fill="#c0c0c0"/><rect x="1186" y="252" width="1" height="596" fill="#c0c0c0"/><rect x="1202" y="252" width="1" height="596" fill="#c0c0c0"/><rect x="1218" y="252" width="1" height="596" fill="#c0c0c0"/><rect x="1234" y="252" width="1" height="596" fill="#c0c0c0"/><rect x="1249" y="252" width="1" height="596" fill="#c0c0c0"/><rect x="1265" y="252" width="1" height="596" fill="#c0c0c0"/><rect x="1281" y="252" width="1" height="596" fill="#c0c0c0"/><rect x="1297" y="252" width="1" height="596" fill="#c0c0c0"/><rect x="1313" y="252" width="1" height="596" fill="#c0c0c0"/><rect x="1329" y="252" width="1" height="596" fill="#c0c0c0"/><rect x="1345" y="252" width="1" height="596" fill="#c0c0c0"/><rect x="1361" y="252" width="1" height="596" fill="#c0c0c0"/><rect x="1377" y="252" width="1" height="596" fill="#c0c0c0"/><rect x="1393" y="252" width="1" height="596" fill="#c0c0c0"/><rect x="1409" y="252" width="1" height="596" fill="#c0c0c0"/><rect x="1425" y="252" width="1" height="596" fill="#c0c0c0"/><rect x="1441" y="252" width="1" height="596" fill="#c0c0c0"/><rect x="1457" y="252" width="1" height="596" fill="#c0c0c0"/><rect x="1027" y="252" width="431" height="1" fill="#c0c0c0"/><rect x="1027" y="847" width="431" height="1" fill="#c0c0c0"/></svg>
<div class="t" style="left:1459px;top:306.84px;font-size:12px;line-height:12px;color:#d0d0d0;font-family:'Liberation Sans', sans-serif;transform:scaleX(0.9);transform-origin:left top;">50</div>
<div class="t" style="left:1459px;top:425.84px;font-size:12px;line-height:12px;color:#d0d0d0;font-family:'Liberation Sans', sans-serif;transform:scaleX(0.9);transform-origin:left top;">40</div>
<div class="t" style="left:1459px;top:544.84px;font-size:12px;line-height:12px;color:#d0d0d0;font-family:'Liberation Sans', sans-serif;transform:scaleX(0.9);transform-origin:left top;">30</div>
<div class="t" style="left:1459px;top:664.84px;font-size:12px;line-height:12px;color:#d0d0d0;font-family:'Liberation Sans', sans-serif;transform:scaleX(0.9);transform-origin:left top;">20</div>
<div class="t" style="left:1459px;top:783.84px;font-size:12px;line-height:12px;color:#d0d0d0;font-family:'Liberation Sans', sans-serif;transform:scaleX(0.9);transform-origin:left top;">10</div>
<div class="t" style="left:1015.0px;width:40px;text-align:center;top:834.84px;font-size:12px;line-height:12px;color:#000;font-family:'Liberation Sans', sans-serif;transform:scaleX(0.9);transform-origin:center top;">47</div>
<div class="t" style="left:1030.5px;width:40px;text-align:center;top:834.84px;font-size:12px;line-height:12px;color:#000;font-family:'Liberation Sans', sans-serif;transform:scaleX(0.9);transform-origin:center top;">47</div>
<div class="t" style="left:1046.5px;width:40px;text-align:center;top:834.84px;font-size:12px;line-height:12px;color:#000;font-family:'Liberation Sans', sans-serif;transform:scaleX(0.9);transform-origin:center top;">46</div>
<div class="t" style="left:1062.5px;width:40px;text-align:center;top:834.84px;font-size:12px;line-height:12px;color:#000;font-family:'Liberation Sans', sans-serif;transform:scaleX(0.9);transform-origin:center top;">49</div>
<div class="t" style="left:1078.5px;width:40px;text-align:center;top:834.84px;font-size:12px;line-height:12px;color:#000;font-family:'Liberation Sans', sans-serif;transform:scaleX(0.9);transform-origin:center top;">43</div>
<div class="t" style="left:1094.5px;width:40px;text-align:center;top:834.84px;font-size:12px;line-height:12px;color:#000;font-family:'Liberation Sans', sans-serif;transform:scaleX(0.9);transform-origin:center top;">50</div>
<div class="t" style="left:1110.5px;width:40px;text-align:center;top:834.84px;font-size:12px;line-height:12px;color:#000;font-family:'Liberation Sans', sans-serif;transform:scaleX(0.9);transform-origin:center top;">48</div>
<div class="t" style="left:1126.5px;width:40px;text-align:center;top:834.84px;font-size:12px;line-height:12px;color:#000;font-family:'Liberation Sans', sans-serif;transform:scaleX(0.9);transform-origin:center top;">41</div>
<div class="t" style="left:1142.5px;width:40px;text-align:center;top:834.84px;font-size:12px;line-height:12px;color:#000;font-family:'Liberation Sans', sans-serif;transform:scaleX(0.9);transform-origin:center top;">47</div>
<div class="t" style="left:1158.5px;width:40px;text-align:center;top:834.84px;font-size:12px;line-height:12px;color:#000;font-family:'Liberation Sans', sans-serif;transform:scaleX(0.9);transform-origin:center top;">46</div>
<div class="t" style="left:1174.5px;width:40px;text-align:center;top:834.84px;font-size:12px;line-height:12px;color:#000;font-family:'Liberation Sans', sans-serif;transform:scaleX(0.9);transform-origin:center top;">47</div>
<div class="t" style="left:1190.5px;width:40px;text-align:center;top:834.84px;font-size:12px;line-height:12px;color:#000;font-family:'Liberation Sans', sans-serif;transform:scaleX(0.9);transform-origin:center top;">46</div>
<div class="t" style="left:1206.5px;width:40px;text-align:center;top:834.84px;font-size:12px;line-height:12px;color:#000;font-family:'Liberation Sans', sans-serif;transform:scaleX(0.9);transform-origin:center top;">47</div>
<div class="t" style="left:1222.0px;width:40px;text-align:center;top:834.84px;font-size:12px;line-height:12px;color:#000;font-family:'Liberation Sans', sans-serif;transform:scaleX(0.9);transform-origin:center top;">49</div>
<div class="t" style="left:1237.5px;width:40px;text-align:center;top:834.84px;font-size:12px;line-height:12px;color:#000;font-family:'Liberation Sans', sans-serif;transform:scaleX(0.9);transform-origin:center top;">50</div>
<div class="t" style="left:1253.5px;width:40px;text-align:center;top:834.84px;font-size:12px;line-height:12px;color:#000;font-family:'Liberation Sans', sans-serif;transform:scaleX(0.9);transform-origin:center top;">48</div>
<div class="t" style="left:1269.5px;width:40px;text-align:center;top:834.84px;font-size:12px;line-height:12px;color:#000;font-family:'Liberation Sans', sans-serif;transform:scaleX(0.9);transform-origin:center top;">47</div>
<div class="t" style="left:1285.5px;width:40px;text-align:center;top:834.84px;font-size:12px;line-height:12px;color:#000;font-family:'Liberation Sans', sans-serif;transform:scaleX(0.9);transform-origin:center top;">49</div>
<div class="t" style="left:1301.5px;width:40px;text-align:center;top:834.84px;font-size:12px;line-height:12px;color:#000;font-family:'Liberation Sans', sans-serif;transform:scaleX(0.9);transform-origin:center top;">52</div>
<div class="t" style="left:1317.5px;width:40px;text-align:center;top:834.84px;font-size:12px;line-height:12px;color:#000;font-family:'Liberation Sans', sans-serif;transform:scaleX(0.9);transform-origin:center top;">50</div>
<div class="t" style="left:1397.5px;width:40px;text-align:center;top:834.84px;font-size:12px;line-height:12px;color:#000;font-family:'Liberation Sans', sans-serif;transform:scaleX(0.9);transform-origin:center top;">42</div>
<div class="t" style="left:1015.0px;width:40px;text-align:center;top:848.84px;font-size:12px;line-height:12px;color:#d0d0d0;font-family:'Liberation Sans', sans-serif;transform:scaleX(0.9);transform-origin:center top;">G16</div>
<div class="t" style="left:1030.5px;width:40px;text-align:center;top:848.84px;font-size:12px;line-height:12px;color:#d0d0d0;font-family:'Liberation Sans', sans-serif;transform:scaleX(0.9);transform-origin:center top;">G21</div>
<div class="t" style="left:1046.5px;width:40px;text-align:center;top:848.84px;font-size:12px;line-height:12px;color:#d0d0d0;font-family:'Liberation Sans', sans-serif;transform:scaleX(0.9);transform-origin:center top;">G26</div>
<div class="t" style="left:1062.5px;width:40px;text-align:center;top:848.84px;font-size:12px;line-height:12px;color:#d0d0d0;font-family:'Liberation Sans', sans-serif;transform:scaleX(0.9);transform-origin:center top;">G27</div>
<div class="t" style="left:1078.5px;width:40px;text-align:center;top:848.84px;font-size:12px;line-height:12px;color:#d0d0d0;font-family:'Liberation Sans', sans-serif;transform:scaleX(0.9);transform-origin:center top;">G20</div>
<div class="t" style="left:1094.5px;width:40px;text-align:center;top:848.84px;font-size:12px;line-height:12px;color:#d0d0d0;font-family:'Liberation Sans', sans-serif;transform:scaleX(0.9);transform-origin:center top;">G18</div>
<div class="t" style="left:1110.5px;width:40px;text-align:center;top:848.84px;font-size:12px;line-height:12px;color:#d0d0d0;font-family:'Liberation Sans', sans-serif;transform:scaleX(0.9);transform-origin:center top;">G22</div>
<div class="t" style="left:1126.5px;width:40px;text-align:center;top:848.84px;font-size:12px;line-height:12px;color:#d0d0d0;font-family:'Liberation Sans', sans-serif;transform:scaleX(0.9);transform-origin:center top;">G11</div>
<div class="t" style="left:1142.5px;width:40px;text-align:center;top:848.84px;font-size:12px;line-height:12px;color:#d0d0d0;font-family:'Liberation Sans', sans-serif;transform:scaleX(0.9);transform-origin:center top;">G15</div>
<div class="t" style="left:1158.5px;width:40px;text-align:center;top:848.84px;font-size:12px;line-height:12px;color:#d0d0d0;font-family:'Liberation Sans', sans-serif;transform:scaleX(0.9);transform-origin:center top;">G19</div>
<div class="t" style="left:1174.5px;width:40px;text-align:center;top:848.84px;font-size:12px;line-height:12px;color:#d0d0d0;font-family:'Liberation Sans', sans-serif;transform:scaleX(0.9);transform-origin:center top;">G7</div>
<div class="t" style="left:1190.5px;width:40px;text-align:center;top:848.84px;font-size:12px;line-height:12px;color:#d0d0d0;font-family:'Liberation Sans', sans-serif;transform:scaleX(0.9);transform-origin:center top;">R10</div>
<div class="t" style="left:1206.5px;width:40px;text-align:center;top:848.84px;font-size:12px;line-height:12px;color:#d0d0d0;font-family:'Liberation Sans', sans-serif;transform:scaleX(0.9);transform-origin:center top;">R12</div>
<div class="t" style="left:1222.0px;width:40px;text-align:center;top:848.84px;font-size:12px;line-height:12px;color:#d0d0d0;font-family:'Liberation Sans', sans-serif;transform:scaleX(0.9);transform-origin:center top;">R11</div>
<div class="t" style="left:1237.5px;width:40px;text-align:center;top:848.84px;font-size:12px;line-height:12px;color:#d0d0d0;font-family:'Liberation Sans', sans-serif;transform:scaleX(0.9);transform-origin:center top;">R20</div>
<div class="t" style="left:1253.5px;width:40px;text-align:center;top:848.84px;font-size:12px;line-height:12px;color:#d0d0d0;font-family:'Liberation Sans', sans-serif;transform:scaleX(0.9);transform-origin:center top;">R5</div>
<div class="t" style="left:1269.5px;width:40px;text-align:center;top:848.84px;font-size:12px;line-height:12px;color:#d0d0d0;font-family:'Liberation Sans', sans-serif;transform:scaleX(0.9);transform-origin:center top;">R19</div>
<div class="t" style="left:1285.5px;width:40px;text-align:center;top:848.84px;font-size:12px;line-height:12px;color:#d0d0d0;font-family:'Liberation Sans', sans-serif;transform:scaleX(0.9);transform-origin:center top;">R4</div>
<div class="t" style="left:1301.5px;width:40px;text-align:center;top:848.84px;font-size:12px;line-height:12px;color:#d0d0d0;font-family:'Liberation Sans', sans-serif;transform:scaleX(0.9);transform-origin:center top;">R21</div>
<div class="t" style="left:1317.5px;width:40px;text-align:center;top:848.84px;font-size:12px;line-height:12px;color:#d0d0d0;font-family:'Liberation Sans', sans-serif;transform:scaleX(0.9);transform-origin:center top;">R6</div>
<div class="t" style="left:1333.5px;width:40px;text-align:center;top:848.84px;font-size:12px;line-height:12px;color:#d0d0d0;font-family:'Liberation Sans', sans-serif;transform:scaleX(0.9);transform-origin:center top;">G29</div>
<div class="t" style="left:1349.5px;width:40px;text-align:center;top:848.84px;font-size:12px;line-height:12px;color:#d0d0d0;font-family:'Liberation Sans', sans-serif;transform:scaleX(0.9);transform-origin:center top;">S38</div>
<div class="t" style="left:1365.5px;width:40px;text-align:center;top:848.84px;font-size:12px;line-height:12px;color:#d0d0d0;font-family:'Liberation Sans', sans-serif;transform:scaleX(0.9);transform-origin:center top;">S120</div>
<div class="t" style="left:1381.5px;width:40px;text-align:center;top:848.84px;font-size:12px;line-height:12px;color:#d0d0d0;font-family:'Liberation Sans', sans-serif;transform:scaleX(0.9);transform-origin:center top;">S123</div>
<div class="t" style="left:1397.5px;width:40px;text-align:center;top:848.84px;font-size:12px;line-height:12px;color:#d0d0d0;font-family:'Liberation Sans', sans-serif;transform:scaleX(0.9);transform-origin:center top;">S136</div>
<div class="t" style="left:1413.5px;width:40px;text-align:center;top:848.84px;font-size:12px;line-height:12px;color:#d0d0d0;font-family:'Liberation Sans', sans-serif;transform:scaleX(0.9);transform-origin:center top;">B22</div>
<div class="t" style="left:1429.5px;width:40px;text-align:center;top:848.84px;font-size:12px;line-height:12px;color:#d0d0d0;font-family:'Liberation Sans', sans-serif;transform:scaleX(0.9);transform-origin:center top;">G4</div>
<div class="t" style="left:1459px;top:848.84px;font-size:12px;line-height:12px;color:#d0d0d0;font-family:'Liberation Sans', sans-serif;transform:scaleX(0.9);transform-origin:left top;">dB</div>
<div style="left:1021px;top:868px;width:454px;height:1px;background:#a0a0a0;"></div>
</body></html>
